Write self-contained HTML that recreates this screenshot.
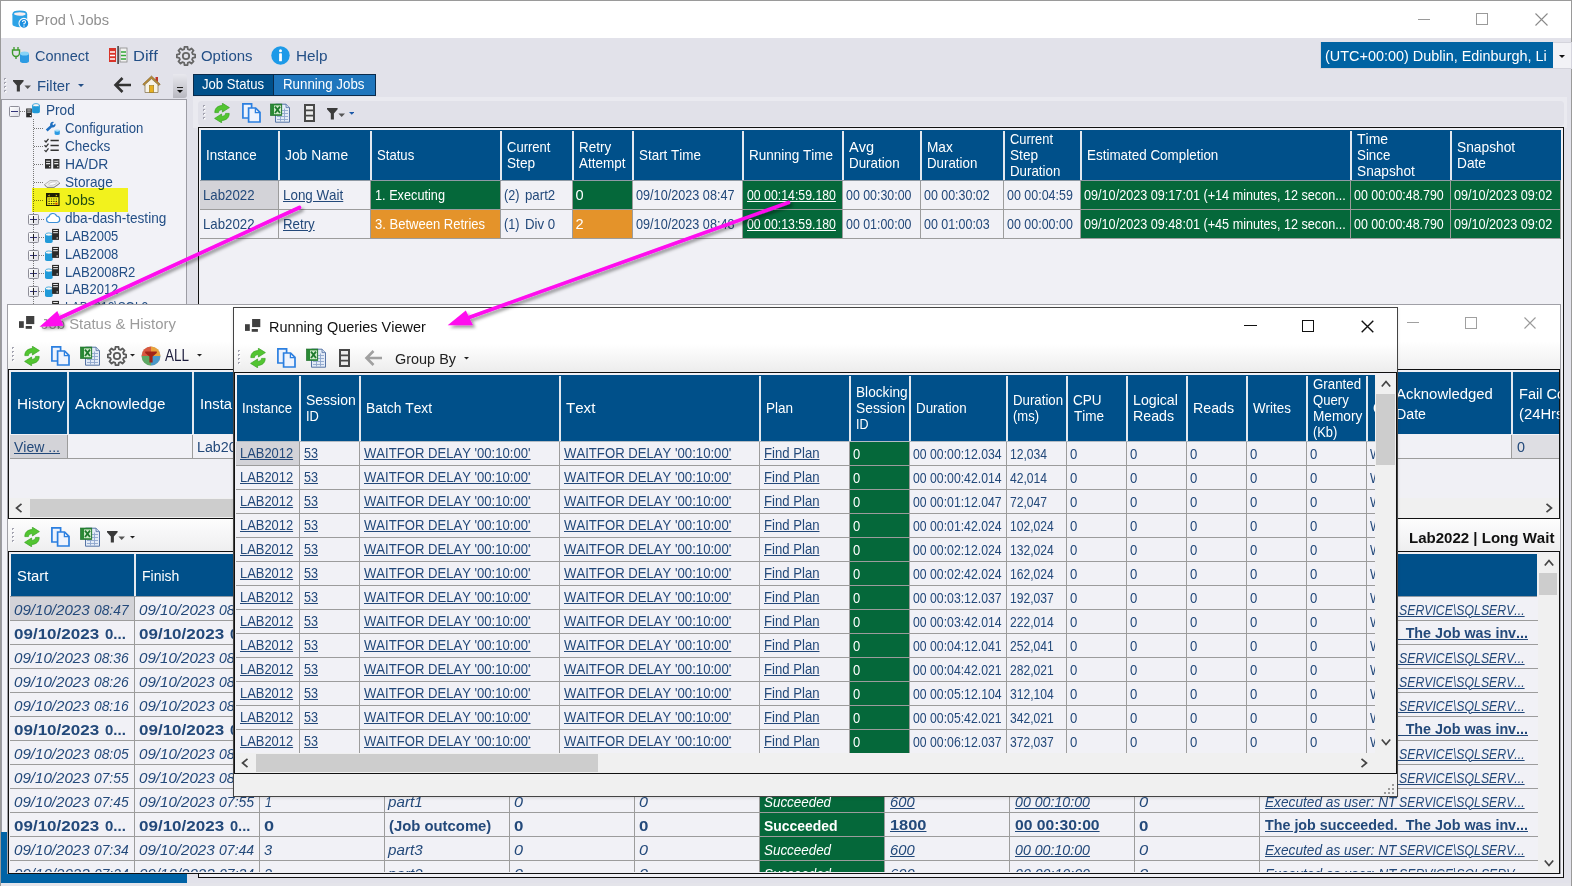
<!DOCTYPE html>
<html lang="en"><head><meta charset="utf-8"><title>Prod \ Jobs</title>
<style>
html,body{margin:0;padding:0}
body{width:1572px;height:886px;overflow:hidden;position:relative;background:#e2e2ea;font-family:"Liberation Sans",sans-serif;font-kerning:none}
div,svg{position:absolute;}
.t{white-space:nowrap;transform-origin:0 50%}
.w{overflow:hidden}
</style></head>
<body>
<div style="left:0px;top:0px;width:1572px;height:38px;background:#fff;"></div><div style="left:0px;top:0px;width:1572px;height:1px;background:#9a9a9a;"></div><div style="left:0px;top:0px;width:1px;height:886px;background:#9a9a9a;"></div><div style="left:1571px;top:0px;width:1px;height:886px;background:#9a9a9a;"></div><svg style="position:absolute;left:12px;top:9.5px" width="17" height="19" viewBox="0 0 17 19"><path d="M0.4 4 V14.2 A7.4 3 0 0 0 15.2 14.2 V4 Z" fill="#2ea3e6"/><ellipse cx="7.8" cy="4" rx="6.6" ry="2.6" fill="#fbeeee" stroke="#2ea3e6" stroke-width="1.6"/>
<circle cx="11.9" cy="13.3" r="4.9" fill="#1c8fe0" stroke="#fff" stroke-width="1.1"/><path d="M10.5 12 A1.5 1.5 0 1 1 12 13.5 V14.4" fill="none" stroke="#fff" stroke-width="1.1"/><circle cx="12" cy="16" r="0.7" fill="#fff"/></svg><div class="t" style="left:35px;top:9.5px;height:20px;line-height:20px;font-size:15.5px;color:#909090;transform:scaleX(0.944);">Prod \ Jobs</div><div style="left:1418px;top:19px;width:12px;height:1px;background:#9a9a9a;"></div><div style="left:1476px;top:13px;width:12px;height:12px;border:1px solid #9a9a9a;box-sizing:border-box;"></div><svg style="position:absolute;left:1535px;top:13px" width="13" height="13" viewBox="0 0 13 13"><path d="M0.5 0.5 L12.5 12.5 M12.5 0.5 L0.5 12.5" stroke="#8a8a8a" stroke-width="1.1"/></svg><svg style="position:absolute;left:11px;top:46px" width="20" height="18" viewBox="0 0 20 18"><path d="M3 1 V4 M7 1 V4" stroke="#3d9a2c" stroke-width="1.3"/><path d="M1.5 4 H8.5 V7 A3.5 3.5 0 0 1 1.5 7 Z" fill="none" stroke="#3d9a2c" stroke-width="1.4"/><path d="M5 10.5 V13" stroke="#3d9a2c" stroke-width="1.4"/>
<path d="M9 7.5 V15 A4.5 2 0 0 0 18 15 V7.5 Z" fill="#2b9be3"/><ellipse cx="13.5" cy="7.5" rx="4.5" ry="2" fill="#86d3f7"/></svg><div class="t" style="left:35px;top:45.5px;height:20px;line-height:20px;font-size:15px;color:#234f86;transform:scaleX(0.967);">Connect</div><svg style="position:absolute;left:108px;top:46px" width="20" height="18" viewBox="0 0 20 18"><rect x="1" y="2" width="7" height="14" fill="#d8342a"/><path d="M2 6 H7 M2 9.5 H7 M2 13 H7" stroke="#fff" stroke-width="1.3"/>
<rect x="9.3" y="0" width="1.6" height="18" fill="#444"/><rect x="12" y="2" width="7" height="14" fill="#f2f2f2" stroke="#888" stroke-width="0.8"/><path d="M13 6 H18 M13 9.5 H18 M13 13 H18" stroke="#35a83a" stroke-width="1.6"/></svg><div class="t" style="left:132.5px;top:45.5px;height:20px;line-height:20px;font-size:15px;color:#234f86;transform:scaleX(1.102);">Diff</div><svg style="position:absolute;left:176.0px;top:45.5px" width="20" height="20" viewBox="0 0 20 20"><path d="M8.20 3.24 L8.52 0.82 L11.48 0.82 L11.80 3.24 L13.51 3.94 L15.44 2.46 L17.54 4.56 L16.06 6.49 L16.76 8.20 L19.18 8.52 L19.18 11.48 L16.76 11.80 L16.06 13.51 L17.54 15.44 L15.44 17.54 L13.51 16.06 L11.80 16.76 L11.48 19.18 L8.52 19.18 L8.20 16.76 L6.49 16.06 L4.56 17.54 L2.46 15.44 L3.94 13.51 L3.24 11.80 L0.82 11.48 L0.82 8.52 L3.24 8.20 L3.94 6.49 L2.46 4.56 L4.56 2.46 L6.49 3.94 Z" fill="none" stroke="#666" stroke-width="1.8" stroke-linejoin="round"/><circle cx="10" cy="10" r="3.2" fill="none" stroke="#666" stroke-width="1.8"/></svg><div class="t" style="left:200.5px;top:45.5px;height:20px;line-height:20px;font-size:15px;color:#234f86;transform:scaleX(0.996);">Options</div><svg style="position:absolute;left:271px;top:46px" width="19" height="19" viewBox="0 0 19 19"><circle cx="9.5" cy="9.5" r="9.2" fill="#1d9ae8"/><circle cx="9.5" cy="4.7" r="1.5" fill="#fff"/><rect x="8.1" y="7.3" width="2.8" height="8" rx="0.6" fill="#fff"/></svg><div class="t" style="left:295.5px;top:45.5px;height:20px;line-height:20px;font-size:15px;color:#234f86;transform:scaleX(1.021);">Help</div><div style="left:1320px;top:41.5px;width:252px;height:27px;background:#f2f2f6;border:1px solid #d4d4dc;box-sizing:border-box;"></div><div style="left:1321px;top:42px;width:232px;height:26px;background:#0063a3;"></div><div class="t" style="left:1324.5px;top:45.8px;height:20px;line-height:20px;font-size:15.2px;color:#fff;transform:scaleX(0.950);">(UTC+00:00) Dublin, Edinburgh, Li</div><svg style="position:absolute;left:1558.5px;top:54.5px" width="6" height="3.5" viewBox="0 0 6 3.5"><path d="M0 0 H6 L3.0 3.0 Z" fill="#111"/></svg><svg style="position:absolute;left:4px;top:78px" width="3" height="18" viewBox="0 0 3 18"><rect x="0" y="0" width="2" height="2" fill="#a4a4b0"/><rect x="1" y="1" width="1.5" height="1.5" fill="#fff"/><rect x="0" y="4" width="2" height="2" fill="#a4a4b0"/><rect x="1" y="5" width="1.5" height="1.5" fill="#fff"/><rect x="0" y="8" width="2" height="2" fill="#a4a4b0"/><rect x="1" y="9" width="1.5" height="1.5" fill="#fff"/><rect x="0" y="12" width="2" height="2" fill="#a4a4b0"/><rect x="1" y="13" width="1.5" height="1.5" fill="#fff"/></svg><svg style="position:absolute;left:13.0px;top:79.7px" width="19" height="12" viewBox="0 0 19 12"><path d="M0 0 H10.6 V1.2 L6.9 5.6 V11.6 H3.8 V5.6 L0 1.2 Z" fill="#3a3a3a"/><path d="M11.4 5.6 H18 L14.7 9 Z" fill="#555"/></svg><div class="t" style="left:37px;top:75.5px;height:20px;line-height:20px;font-size:15px;color:#234f86;transform:scaleX(0.990);">Filter</div><svg style="position:absolute;left:77.5px;top:84.0px" width="6" height="3.5" viewBox="0 0 6 3.5"><path d="M0 0 H6 L3.0 3.0 Z" fill="#234f86"/></svg><svg style="position:absolute;left:113.0px;top:76px" width="20" height="18" viewBox="0 0 20 18"><path d="M18 9 H3 M9.5 2 L2.5 9 L9.5 16" fill="none" stroke="#333" stroke-width="2.6"/></svg><svg style="position:absolute;left:142.0px;top:75.0px" width="19" height="19" viewBox="0 0 19 19"><path d="M13.5 2 H16 V7 L13.5 5 Z" fill="#c0392b"/>
<path d="M9.5 1 L0.8 9.2 L2.2 10.6 L9.5 3.8 L16.8 10.6 L18.2 9.2 Z" fill="#b78a34" stroke="#7a5a1e" stroke-width="0.6"/>
<path d="M3 9.6 L9.5 3.8 L16 9.6 V17.5 H3 Z" fill="#f7f3e6" stroke="#8b7a55" stroke-width="0.8"/>
<rect x="7.3" y="10.5" width="4.4" height="7" fill="#e8b020" stroke="#9a7a20" stroke-width="0.6"/></svg><div style="left:173px;top:74px;width:14px;height:24px;background:linear-gradient(#e8e8ee,#b8b8c0);border-radius:0 3px 3px 0;"></div><div style="left:177px;top:87px;width:6px;height:1.3px;background:#222;"></div><svg style="position:absolute;left:177.0px;top:90.0px" width="6" height="3.5" viewBox="0 0 6 3.5"><path d="M0 0 H6 L3.0 3.0 Z" fill="#111"/></svg><div style="left:193px;top:73.6px;width:182.6px;height:22.2px;background:#0a2a4a;"></div><div style="left:194px;top:74.6px;width:79px;height:20.2px;background:#00508a;"></div><div style="left:274px;top:74.6px;width:100.6px;height:20.2px;background:#1f76bd;"></div><div class="t" style="left:201.5px;top:74.7px;height:19px;line-height:19px;font-size:14.3px;color:#fff;transform:scaleX(0.918);">Job Status</div><div class="t" style="left:283px;top:74.7px;height:19px;line-height:19px;font-size:14.3px;color:#fff;transform:scaleX(0.932);">Running Jobs</div><div style="left:193px;top:97px;width:1374px;height:31px;background:#eaeaf0;"></div><div style="left:198.2px;top:100.6px;width:1365.4px;height:25px;background:#e1e1e9;border-radius:3.5px;"></div><svg style="position:absolute;left:202.5px;top:105px" width="3" height="16" viewBox="0 0 3 16"><rect x="0" y="0" width="2" height="2" fill="#a4a4b0"/><rect x="1" y="1" width="1.5" height="1.5" fill="#fff"/><rect x="0" y="4" width="2" height="2" fill="#a4a4b0"/><rect x="1" y="5" width="1.5" height="1.5" fill="#fff"/><rect x="0" y="8" width="2" height="2" fill="#a4a4b0"/><rect x="1" y="9" width="1.5" height="1.5" fill="#fff"/><rect x="0" y="12" width="2" height="2" fill="#a4a4b0"/><rect x="1" y="13" width="1.5" height="1.5" fill="#fff"/></svg><svg style="position:absolute;left:213.8px;top:102.6px" width="16" height="20" viewBox="0 0 16 20"><path d="M0.8 9.6 C0.8 5 4 2.6 8.4 2.6 L8.4 0.2 L15.4 4.6 L8.4 9 L8.4 6.6 C6.2 6.6 4.8 7.6 4.4 9.6 Z" fill="#52c531" stroke="#36a21f" stroke-width="0.7"/>
<path d="M15.2 10.4 C15.2 15 12 17.4 7.6 17.4 L7.6 19.8 L0.6 15.4 L7.6 11 L7.6 13.4 C9.8 13.4 11.2 12.4 11.6 10.4 Z" fill="#52c531" stroke="#36a21f" stroke-width="0.7"/></svg><svg style="position:absolute;left:241.5px;top:102.8px" width="19" height="20" viewBox="0 0 19 20"><path d="M0.9 0.9 H9.6 V15 H0.9 Z" fill="#eef3fd" stroke="#2b7fe0" stroke-width="1.7"/>
<path d="M6.6 5 H13.6 L18 9.4 V19 H6.6 Z" fill="#eef3fd" stroke="#2b7fe0" stroke-width="1.7"/>
<path d="M13.4 5.2 V9.6 H17.8" fill="none" stroke="#2b7fe0" stroke-width="1.3"/></svg><svg style="position:absolute;left:269.9px;top:103px" width="20" height="20" viewBox="0 0 20 20"><path d="M5.5 1.2 H16 L19.5 4.6 V19.2 H5.5 Z" fill="#e3ebf7" stroke="#5674a6" stroke-width="1"/>
<path d="M16 1.2 V4.6 H19.5" fill="#c9d6ea" stroke="#5674a6" stroke-width="0.8"/>
<path d="M11.5 7.5 H18 M11.5 10.5 H18 M7 13.5 H18 M7 16.5 H18 M14.5 5.5 V18.5 M10.5 13 V18.5" stroke="#8ea6cc" stroke-width="0.9"/>
<rect x="0.4" y="1" width="11.4" height="11.6" fill="#2a8a35" stroke="#1b6b28" stroke-width="0.6"/>
<rect x="4" y="2.4" width="7" height="8.8" fill="#cfe9c9"/>
<path d="M5 3.6 L10 10 M10 3.6 L5 10" stroke="#1e7a2c" stroke-width="1.8"/></svg><svg style="position:absolute;left:303.7px;top:103.8px" width="11" height="18" viewBox="0 0 11 18"><rect x="1" y="1" width="9" height="16" fill="#ececec" stroke="#484848" stroke-width="2"/>
<path d="M1 6.3 H10 M1 11.7 H10" stroke="#484848" stroke-width="1.7"/></svg><svg style="position:absolute;left:326.6px;top:107.7px" width="19" height="12" viewBox="0 0 19 12"><path d="M0 0 H10.6 V1.2 L6.9 5.6 V11.6 H3.8 V5.6 L0 1.2 Z" fill="#3a3a3a"/><path d="M11.4 5.6 H18 L14.7 9 Z" fill="#555"/></svg><svg style="position:absolute;left:348.75px;top:112.025px" width="5.5" height="3.25" viewBox="0 0 5.5 3.25"><path d="M0 0 H5.5 L2.75 2.75 Z" fill="#1b58a8"/></svg>
<div style="left:1px;top:99px;width:186px;height:740px;background:#f2f2f7;border:1px solid #9c9ca4;box-sizing:border-box;"></div><div class="t" style="left:45.7px;top:100.6px;height:19px;line-height:19px;font-size:14.3px;color:#234f86;transform:scaleX(0.953);">Prod</div><div class="t" style="left:64.7px;top:118.6px;height:19px;line-height:19px;font-size:14.3px;color:#234f86;transform:scaleX(0.921);">Configuration</div><div class="t" style="left:64.7px;top:136.6px;height:19px;line-height:19px;font-size:14.3px;color:#234f86;transform:scaleX(0.950);">Checks</div><div class="t" style="left:64.7px;top:154.6px;height:19px;line-height:19px;font-size:14.3px;color:#234f86;transform:scaleX(0.973);">HA/DR</div><div class="t" style="left:64.7px;top:172.6px;height:19px;line-height:19px;font-size:14.3px;color:#234f86;transform:scaleX(0.954);">Storage</div><div class="t" style="left:64.7px;top:190.6px;height:19px;line-height:19px;font-size:14.3px;color:#234f86;transform:scaleX(0.987);">Jobs</div><div class="t" style="left:64.7px;top:208.7px;height:19px;line-height:19px;font-size:14.3px;color:#234f86;transform:scaleX(0.951);">dba-dash-testing</div><div class="t" style="left:64.7px;top:226.7px;height:19px;line-height:19px;font-size:14.3px;color:#234f86;transform:scaleX(0.906);">LAB2005</div><div class="t" style="left:64.7px;top:244.6px;height:19px;line-height:19px;font-size:14.3px;color:#234f86;transform:scaleX(0.906);">LAB2008</div><div class="t" style="left:64.7px;top:262.5px;height:19px;line-height:19px;font-size:14.3px;color:#234f86;transform:scaleX(0.912);">LAB2008R2</div><div class="t" style="left:64.7px;top:280.4px;height:19px;line-height:19px;font-size:14.3px;color:#234f86;transform:scaleX(0.906);">LAB2012</div><div class="t" style="left:64.7px;top:298.3px;height:19px;line-height:19px;font-size:14.3px;color:#234f86;transform:scaleX(0.838);">LAB2012\SQL2</div><div style="left:33px;top:119px;width:1px;height:190px;background-image:linear-gradient(#777 50%,transparent 50%);background-size:1px 2px;"></div><div style="left:20px;top:111px;width:6px;height:1px;background-image:linear-gradient(90deg,#777 50%,transparent 50%);background-size:2px 1px;"></div><div style="left:34px;top:128px;width:10px;height:1px;background-image:linear-gradient(90deg,#777 50%,transparent 50%);background-size:2px 1px;"></div><div style="left:34px;top:146px;width:10px;height:1px;background-image:linear-gradient(90deg,#777 50%,transparent 50%);background-size:2px 1px;"></div><div style="left:34px;top:164px;width:10px;height:1px;background-image:linear-gradient(90deg,#777 50%,transparent 50%);background-size:2px 1px;"></div><div style="left:34px;top:182px;width:10px;height:1px;background-image:linear-gradient(90deg,#777 50%,transparent 50%);background-size:2px 1px;"></div><div style="left:34px;top:200px;width:10px;height:1px;background-image:linear-gradient(90deg,#777 50%,transparent 50%);background-size:2px 1px;"></div><div style="left:39px;top:219px;width:5px;height:1px;background-image:linear-gradient(90deg,#777 50%,transparent 50%);background-size:2px 1px;"></div><div style="left:39px;top:237px;width:5px;height:1px;background-image:linear-gradient(90deg,#777 50%,transparent 50%);background-size:2px 1px;"></div><div style="left:39px;top:255px;width:5px;height:1px;background-image:linear-gradient(90deg,#777 50%,transparent 50%);background-size:2px 1px;"></div><div style="left:39px;top:273px;width:5px;height:1px;background-image:linear-gradient(90deg,#777 50%,transparent 50%);background-size:2px 1px;"></div><div style="left:39px;top:291px;width:5px;height:1px;background-image:linear-gradient(90deg,#777 50%,transparent 50%);background-size:2px 1px;"></div><div style="left:9.0px;top:105.7px;width:11px;height:11px;border:1px solid #8e8e98;border-radius:1.5px;box-sizing:border-box;background:linear-gradient(135deg,#fff,#dedee6);"></div><div style="left:11.0px;top:110.60000000000001px;width:7px;height:1.2px;background:#33347a;"></div><div style="left:28.0px;top:213.8px;width:11px;height:11px;border:1px solid #8e8e98;border-radius:1.5px;box-sizing:border-box;background:linear-gradient(135deg,#fff,#dedee6);"></div><div style="left:30.0px;top:218.70000000000002px;width:7px;height:1.2px;background:#33347a;"></div><div style="left:32.9px;top:215.8px;width:1.2px;height:7px;background:#222;"></div><div style="left:28.0px;top:231.8px;width:11px;height:11px;border:1px solid #8e8e98;border-radius:1.5px;box-sizing:border-box;background:linear-gradient(135deg,#fff,#dedee6);"></div><div style="left:30.0px;top:236.70000000000002px;width:7px;height:1.2px;background:#33347a;"></div><div style="left:32.9px;top:233.8px;width:1.2px;height:7px;background:#222;"></div><div style="left:28.0px;top:249.8px;width:11px;height:11px;border:1px solid #8e8e98;border-radius:1.5px;box-sizing:border-box;background:linear-gradient(135deg,#fff,#dedee6);"></div><div style="left:30.0px;top:254.70000000000002px;width:7px;height:1.2px;background:#33347a;"></div><div style="left:32.9px;top:251.8px;width:1.2px;height:7px;background:#222;"></div><div style="left:28.0px;top:267.8px;width:11px;height:11px;border:1px solid #8e8e98;border-radius:1.5px;box-sizing:border-box;background:linear-gradient(135deg,#fff,#dedee6);"></div><div style="left:30.0px;top:272.7px;width:7px;height:1.2px;background:#33347a;"></div><div style="left:32.9px;top:269.8px;width:1.2px;height:7px;background:#222;"></div><div style="left:28.0px;top:285.8px;width:11px;height:11px;border:1px solid #8e8e98;border-radius:1.5px;box-sizing:border-box;background:linear-gradient(135deg,#fff,#dedee6);"></div><div style="left:30.0px;top:290.7px;width:7px;height:1.2px;background:#33347a;"></div><div style="left:32.9px;top:287.8px;width:1.2px;height:7px;background:#222;"></div><svg style="position:absolute;left:26px;top:101.5px" width="15" height="16" viewBox="0 0 15 16"><rect x="0.2" y="6.5" width="5.6" height="8.8" fill="#2a2a2a"/><path d="M1.2 8 H4.8 M1.2 10.1 H4.8" stroke="#f4f4f4" stroke-width="0.9"/><rect x="3.9" y="13" width="1.1" height="1.1" fill="#f4f4f4"/>
<path d="M6.1 3 V9.8 A3.9 1.5 0 0 0 13.9 9.8 V3 Z" fill="#219ad8"/><ellipse cx="10" cy="3.2" rx="3.4" ry="1.55" fill="#fdf6f2" stroke="#219ad8" stroke-width="0.8"/></svg><svg style="position:absolute;left:44.5px;top:120.5px" width="16" height="15" viewBox="0 0 16 15"><path d="M0.8 8.6 L5.2 4.6 A2.9 2.9 0 0 1 9 1 L7.2 3 L8.4 4.3 L10.3 2.4 A2.9 2.9 0 0 1 6.8 6.4 L2.6 10.4 Z" fill="#1f6fc0"/><path d="M9.6 9.6 V13 A2.6 1.1 0 0 0 14.8 13 V9.6 Z" fill="#2b9be3"/><ellipse cx="12.2" cy="9.6" rx="2.6" ry="1.1" fill="#a8e0fa"/></svg><svg style="position:absolute;left:44.4px;top:138.2px" width="15" height="15" viewBox="0 0 15 15"><path d="M0.5 2.5 L2 4 L4.5 0.8 M0.5 7.3 L2 8.8 L4.5 5.6 M0.5 12.1 L2 13.6 L4.5 10.4" fill="none" stroke="#333" stroke-width="1.25"/><path d="M6.5 2.6 H14.8 M6.5 7.4 H14.8 M6.5 12.2 H14.8" stroke="#333" stroke-width="1.5"/></svg><svg style="position:absolute;left:44.8px;top:159.2px" width="15" height="10" viewBox="0 0 15 10"><rect x="0" y="0" width="6.2" height="9.6" fill="#2e2e2e"/><rect x="8.2" y="0" width="6.2" height="9.6" fill="#2e2e2e"/><path d="M1.1 2.2 H5.1 M9.3 2.2 H13.3 M1.1 4.6 H5.1 M9.3 4.6 H13.3" stroke="#e8e8e8" stroke-width="1.1"/><rect x="4" y="7" width="1.2" height="1.2" fill="#ddd"/><rect x="12.2" y="7" width="1.2" height="1.2" fill="#ddd"/></svg><svg style="position:absolute;left:43.8px;top:180.4px" width="16.4" height="8" viewBox="0 0 16.4 8"><path d="M0.5 4.6 L6 0.6 H13 L16 3.2 L10 7.4 H3 Z" fill="#eee" stroke="#9a9a9a" stroke-width="0.7"/><ellipse cx="8.6" cy="3.6" rx="4" ry="1.5" fill="#fff" stroke="#aaa" stroke-width="0.5" transform="rotate(-12 8.6 3.6)"/><path d="M0.5 4.6 L3 7.4 H10 L16 3.2" fill="none" stroke="#777" stroke-width="0.8"/></svg><svg style="position:absolute;left:45.8px;top:192.6px" width="14" height="13.4" viewBox="0 0 14 13.4"><rect x="0.6" y="0.6" width="12.4" height="12" fill="#fffbe0" stroke="#1e1e1e" stroke-width="1.2"/><rect x="0.6" y="0.6" width="12.4" height="3.6" fill="#1e1e1e"/><path d="M3.6 1.4 L2 2.4 L3.6 3.4 Z M9.8 1.4 L11.4 2.4 L9.8 3.4 Z" fill="#f0d020"/><path d="M2.4 6 H3.8 M4.8 6 H6.2 M7.2 6 H8.6 M9.6 6 H11 M2.4 8.3 H3.8 M4.8 8.3 H6.2 M7.2 8.3 H8.6 M9.6 8.3 H11 M2.4 10.6 H3.8 M4.8 10.6 H6.2 M7.2 10.6 H8.6" stroke="#444" stroke-width="1.2"/><rect x="9.3" y="9.7" width="2.2" height="2" fill="#d8402a"/></svg><svg style="position:absolute;left:45px;top:212.3px" width="16" height="12" viewBox="0 0 16 12"><path d="M4 10.5 A3 3 0 0 1 4 4.6 A4 4 0 0 1 11.6 4 A3.3 3.3 0 0 1 12.2 10.5 Z" fill="#fff" stroke="#3b8fd8" stroke-width="1.2"/></svg><svg style="position:absolute;left:44px;top:228px" width="16" height="16" viewBox="0 0 16 16"><path d="M1 6.3 V13.4 A3.85 1.5 0 0 0 8.7 13.4 V6.3 Z" fill="#219ad8"/><ellipse cx="4.85" cy="6.5" rx="3.35" ry="1.55" fill="#fdf6f2" stroke="#219ad8" stroke-width="0.8"/>
<rect x="8.1" y="0.9" width="6.9" height="11" fill="#2a2a2a"/><path d="M9.2 2.5 H13.9 M9.2 4.7 H13.9" stroke="#f4f4f4" stroke-width="0.95"/><rect x="12.6" y="9.4" width="1.2" height="1.2" fill="#f4f4f4"/></svg><svg style="position:absolute;left:44px;top:246px" width="16" height="16" viewBox="0 0 16 16"><path d="M1 6.3 V13.4 A3.85 1.5 0 0 0 8.7 13.4 V6.3 Z" fill="#219ad8"/><ellipse cx="4.85" cy="6.5" rx="3.35" ry="1.55" fill="#fdf6f2" stroke="#219ad8" stroke-width="0.8"/>
<rect x="8.1" y="0.9" width="6.9" height="11" fill="#2a2a2a"/><path d="M9.2 2.5 H13.9 M9.2 4.7 H13.9" stroke="#f4f4f4" stroke-width="0.95"/><rect x="12.6" y="9.4" width="1.2" height="1.2" fill="#f4f4f4"/></svg><svg style="position:absolute;left:44px;top:264px" width="16" height="16" viewBox="0 0 16 16"><path d="M1 6.3 V13.4 A3.85 1.5 0 0 0 8.7 13.4 V6.3 Z" fill="#219ad8"/><ellipse cx="4.85" cy="6.5" rx="3.35" ry="1.55" fill="#fdf6f2" stroke="#219ad8" stroke-width="0.8"/>
<rect x="8.1" y="0.9" width="6.9" height="11" fill="#2a2a2a"/><path d="M9.2 2.5 H13.9 M9.2 4.7 H13.9" stroke="#f4f4f4" stroke-width="0.95"/><rect x="12.6" y="9.4" width="1.2" height="1.2" fill="#f4f4f4"/></svg><svg style="position:absolute;left:44px;top:282px" width="16" height="16" viewBox="0 0 16 16"><path d="M1 6.3 V13.4 A3.85 1.5 0 0 0 8.7 13.4 V6.3 Z" fill="#219ad8"/><ellipse cx="4.85" cy="6.5" rx="3.35" ry="1.55" fill="#fdf6f2" stroke="#219ad8" stroke-width="0.8"/>
<rect x="8.1" y="0.9" width="6.9" height="11" fill="#2a2a2a"/><path d="M9.2 2.5 H13.9 M9.2 4.7 H13.9" stroke="#f4f4f4" stroke-width="0.95"/><rect x="12.6" y="9.4" width="1.2" height="1.2" fill="#f4f4f4"/></svg><svg style="position:absolute;left:44px;top:300px" width="16" height="16" viewBox="0 0 16 16"><path d="M1 6.3 V13.4 A3.85 1.5 0 0 0 8.7 13.4 V6.3 Z" fill="#219ad8"/><ellipse cx="4.85" cy="6.5" rx="3.35" ry="1.55" fill="#fdf6f2" stroke="#219ad8" stroke-width="0.8"/>
<rect x="8.1" y="0.9" width="6.9" height="11" fill="#2a2a2a"/><path d="M9.2 2.5 H13.9 M9.2 4.7 H13.9" stroke="#f4f4f4" stroke-width="0.95"/><rect x="12.6" y="9.4" width="1.2" height="1.2" fill="#f4f4f4"/></svg><div style="left:31.8px;top:188.2px;width:96.2px;height:23.4px;background:#ffff1e;mix-blend-mode:multiply;"></div>
<div style="left:198px;top:127px;width:1366px;height:750.5px;background:#f0f0f5;border:1px solid #111;box-sizing:border-box;"></div><div style="left:200.8px;top:130px;width:1360.2px;height:50px;background:#00508a;"></div><div style="left:277.8px;top:130.5px;width:2.2px;height:49px;background:#e3e9f0;"></div><div style="left:369.8px;top:130.5px;width:2.2px;height:49px;background:#e3e9f0;"></div><div style="left:499.8px;top:130.5px;width:2.2px;height:49px;background:#e3e9f0;"></div><div style="left:571.8px;top:130.5px;width:2.2px;height:49px;background:#e3e9f0;"></div><div style="left:631.8px;top:130.5px;width:2.2px;height:49px;background:#e3e9f0;"></div><div style="left:741.8px;top:130.5px;width:2.2px;height:49px;background:#e3e9f0;"></div><div style="left:841.8px;top:130.5px;width:2.2px;height:49px;background:#e3e9f0;"></div><div style="left:919.8px;top:130.5px;width:2.2px;height:49px;background:#e3e9f0;"></div><div style="left:1002.8px;top:130.5px;width:2.2px;height:49px;background:#e3e9f0;"></div><div style="left:1079.8px;top:130.5px;width:2.2px;height:49px;background:#e3e9f0;"></div><div style="left:1349.8px;top:130.5px;width:2.2px;height:49px;background:#e3e9f0;"></div><div style="left:1449.8px;top:130.5px;width:2.2px;height:49px;background:#e3e9f0;"></div><div class="t" style="left:205.5px;top:145.9px;height:19px;line-height:19px;font-size:14.3px;color:#fff;transform:scaleX(0.936);">Instance</div><div class="t" style="left:285.0px;top:145.9px;height:19px;line-height:19px;font-size:14.3px;color:#fff;transform:scaleX(0.968);">Job Name</div><div class="t" style="left:376.7px;top:145.9px;height:19px;line-height:19px;font-size:14.3px;color:#fff;transform:scaleX(0.918);">Status</div><div class="t" style="left:506.79999999999995px;top:137.9px;height:19px;line-height:19px;font-size:14.3px;color:#fff;transform:scaleX(0.910);">Current</div><div class="t" style="left:506.79999999999995px;top:153.8px;height:19px;line-height:19px;font-size:14.3px;color:#fff;transform:scaleX(0.955);">Step</div><div class="t" style="left:578.8px;top:137.9px;height:19px;line-height:19px;font-size:14.3px;color:#fff;transform:scaleX(0.940);">Retry</div><div class="t" style="left:578.8px;top:153.8px;height:19px;line-height:19px;font-size:14.3px;color:#fff;transform:scaleX(0.942);">Attempt</div><div class="t" style="left:638.9px;top:145.9px;height:19px;line-height:19px;font-size:14.3px;color:#fff;transform:scaleX(0.938);">Start Time</div><div class="t" style="left:748.8px;top:145.9px;height:19px;line-height:19px;font-size:14.3px;color:#fff;transform:scaleX(0.945);">Running Time</div><div class="t" style="left:848.5px;top:137.9px;height:19px;line-height:19px;font-size:14.3px;color:#fff;transform:scaleX(1.017);">Avg</div><div class="t" style="left:848.5px;top:153.8px;height:19px;line-height:19px;font-size:14.3px;color:#fff;transform:scaleX(0.936);">Duration</div><div class="t" style="left:926.6999999999999px;top:137.9px;height:19px;line-height:19px;font-size:14.3px;color:#fff;transform:scaleX(0.955);">Max</div><div class="t" style="left:926.6999999999999px;top:153.8px;height:19px;line-height:19px;font-size:14.3px;color:#fff;transform:scaleX(0.931);">Duration</div><div class="t" style="left:1009.6999999999999px;top:129.9px;height:19px;line-height:19px;font-size:14.3px;color:#fff;transform:scaleX(0.902);">Current</div><div class="t" style="left:1009.6999999999999px;top:145.9px;height:19px;line-height:19px;font-size:14.3px;color:#fff;transform:scaleX(0.955);">Step</div><div class="t" style="left:1009.6999999999999px;top:161.9px;height:19px;line-height:19px;font-size:14.3px;color:#fff;transform:scaleX(0.931);">Duration</div><div class="t" style="left:1086.8000000000002px;top:145.9px;height:19px;line-height:19px;font-size:14.3px;color:#fff;transform:scaleX(0.939);">Estimated Completion</div><div class="t" style="left:1357.3000000000002px;top:129.9px;height:19px;line-height:19px;font-size:14.3px;color:#fff;transform:scaleX(0.979);">Time</div><div class="t" style="left:1357.3000000000002px;top:145.9px;height:19px;line-height:19px;font-size:14.3px;color:#fff;transform:scaleX(0.934);">Since</div><div class="t" style="left:1357.3000000000002px;top:161.9px;height:19px;line-height:19px;font-size:14.3px;color:#fff;transform:scaleX(0.957);">Snapshot</div><div class="t" style="left:1456.9px;top:137.9px;height:19px;line-height:19px;font-size:14.3px;color:#fff;transform:scaleX(0.963);">Snapshot</div><div class="t" style="left:1456.9px;top:153.8px;height:19px;line-height:19px;font-size:14.3px;color:#fff;transform:scaleX(0.957);">Date</div><div style="left:199.6px;top:181px;width:1361.4px;height:28px;background:#f1f1f6;"></div><div style="left:199.6px;top:181px;width:78.4px;height:28px;background:#d3d3d8;"></div><div class="t" style="left:202.7px;top:185.9px;height:19px;line-height:19px;font-size:14.6px;color:#23497a;transform:scaleX(0.908);">Lab2022</div><div class="t" style="left:282.7px;top:185.9px;height:19px;line-height:19px;font-size:14.6px;color:#23497a;text-decoration:underline;transform:scaleX(0.917);">Long Wait</div><div style="left:371px;top:181px;width:129px;height:28px;background:#05683a;"></div><div class="t" style="left:374.5px;top:185.9px;height:19px;line-height:19px;font-size:14.6px;color:#fff;transform:scaleX(0.871);">1. Executing</div><div class="t" style="left:504.0px;top:185.9px;height:19px;line-height:19px;font-size:14.6px;color:#23497a;transform:scaleX(0.863);">(2)</div><div style="left:573px;top:181px;width:59px;height:28px;background:#05683a;"></div><div class="t" style="left:575.6px;top:185.9px;height:19px;line-height:19px;font-size:14.6px;color:#fff;">0</div><div class="t" style="left:635.7px;top:185.9px;height:19px;line-height:19px;font-size:14.6px;color:#23497a;transform:scaleX(0.867);">09/10/2023 08:47</div><div style="left:743px;top:181px;width:99px;height:28px;background:#05683a;"></div><div class="t" style="left:746.7px;top:185.9px;height:19px;line-height:19px;font-size:14.6px;color:#fff;text-decoration:underline;transform:scaleX(0.843);">00 00:14:59.180</div><div class="t" style="left:845.7px;top:185.9px;height:19px;line-height:19px;font-size:14.6px;color:#23497a;transform:scaleX(0.849);">00 00:30:00</div><div class="t" style="left:923.6px;top:185.9px;height:19px;line-height:19px;font-size:14.6px;color:#23497a;transform:scaleX(0.852);">00 00:30:02</div><div class="t" style="left:1006.6px;top:185.9px;height:19px;line-height:19px;font-size:14.6px;color:#23497a;transform:scaleX(0.854);">00 00:04:59</div><div style="left:1081px;top:181px;width:269px;height:28px;background:#05683a;"></div><div class="t" style="left:1083.7px;top:185.9px;height:19px;line-height:19px;font-size:14.6px;color:#fff;transform:scaleX(0.866);">09/10/2023 09:17:01 (+14 minutes, 12 secon...</div><div style="left:1351px;top:181px;width:99px;height:28px;background:#05683a;"></div><div class="t" style="left:1353.6px;top:185.9px;height:19px;line-height:19px;font-size:14.6px;color:#fff;transform:scaleX(0.850);">00 00:00:48.790</div><div style="left:1451px;top:181px;width:109px;height:28px;background:#05683a;"></div><div class="t" style="left:1453.8px;top:185.9px;height:19px;line-height:19px;font-size:14.6px;color:#fff;transform:scaleX(0.865);">09/10/2023 09:02</div><div class="t" style="left:525.0px;top:185.9px;height:19px;line-height:19px;font-size:14.6px;color:#23497a;transform:scaleX(0.908);">part2</div><div style="left:200px;top:209px;width:1361px;height:1px;background:#9c9c9c;"></div><div style="left:278px;top:181px;width:1px;height:29px;background:#9c9c9c;"></div><div style="left:370px;top:181px;width:1px;height:29px;background:#9c9c9c;"></div><div style="left:500px;top:181px;width:1px;height:29px;background:#9c9c9c;"></div><div style="left:572px;top:181px;width:1px;height:29px;background:#9c9c9c;"></div><div style="left:632px;top:181px;width:1px;height:29px;background:#9c9c9c;"></div><div style="left:742px;top:181px;width:1px;height:29px;background:#9c9c9c;"></div><div style="left:842px;top:181px;width:1px;height:29px;background:#9c9c9c;"></div><div style="left:920px;top:181px;width:1px;height:29px;background:#9c9c9c;"></div><div style="left:1003px;top:181px;width:1px;height:29px;background:#9c9c9c;"></div><div style="left:1080px;top:181px;width:1px;height:29px;background:#9c9c9c;"></div><div style="left:1350px;top:181px;width:1px;height:29px;background:#9c9c9c;"></div><div style="left:1450px;top:181px;width:1px;height:29px;background:#9c9c9c;"></div><div style="left:1560px;top:181px;width:1px;height:29px;background:#9c9c9c;"></div><div style="left:199.6px;top:210px;width:1361.4px;height:28px;background:#f1f1f6;"></div><div class="t" style="left:202.7px;top:214.9px;height:19px;line-height:19px;font-size:14.6px;color:#23497a;transform:scaleX(0.908);">Lab2022</div><div class="t" style="left:282.7px;top:214.9px;height:19px;line-height:19px;font-size:14.6px;color:#23497a;text-decoration:underline;transform:scaleX(0.909);">Retry</div><div style="left:371px;top:210px;width:129px;height:28px;background:#e4932a;"></div><div class="t" style="left:374.5px;top:214.9px;height:19px;line-height:19px;font-size:14.6px;color:#fff;transform:scaleX(0.893);">3. Between Retries</div><div class="t" style="left:504.0px;top:214.9px;height:19px;line-height:19px;font-size:14.6px;color:#23497a;transform:scaleX(0.863);">(1)</div><div style="left:573px;top:210px;width:59px;height:28px;background:#e4932a;"></div><div class="t" style="left:575.6px;top:214.9px;height:19px;line-height:19px;font-size:14.6px;color:#fff;">2</div><div class="t" style="left:635.7px;top:214.9px;height:19px;line-height:19px;font-size:14.6px;color:#23497a;transform:scaleX(0.867);">09/10/2023 08:48</div><div style="left:743px;top:210px;width:99px;height:28px;background:#05683a;"></div><div class="t" style="left:746.7px;top:214.9px;height:19px;line-height:19px;font-size:14.6px;color:#fff;text-decoration:underline;transform:scaleX(0.843);">00 00:13:59.180</div><div class="t" style="left:845.7px;top:214.9px;height:19px;line-height:19px;font-size:14.6px;color:#23497a;transform:scaleX(0.849);">00 01:00:00</div><div class="t" style="left:923.6px;top:214.9px;height:19px;line-height:19px;font-size:14.6px;color:#23497a;transform:scaleX(0.852);">00 01:00:03</div><div class="t" style="left:1006.6px;top:214.9px;height:19px;line-height:19px;font-size:14.6px;color:#23497a;transform:scaleX(0.854);">00 00:00:00</div><div style="left:1081px;top:210px;width:269px;height:28px;background:#05683a;"></div><div class="t" style="left:1083.7px;top:214.9px;height:19px;line-height:19px;font-size:14.6px;color:#fff;transform:scaleX(0.866);">09/10/2023 09:48:01 (+45 minutes, 12 secon...</div><div style="left:1351px;top:210px;width:99px;height:28px;background:#05683a;"></div><div class="t" style="left:1353.6px;top:214.9px;height:19px;line-height:19px;font-size:14.6px;color:#fff;transform:scaleX(0.850);">00 00:00:48.790</div><div style="left:1451px;top:210px;width:109px;height:28px;background:#05683a;"></div><div class="t" style="left:1453.8px;top:214.9px;height:19px;line-height:19px;font-size:14.6px;color:#fff;transform:scaleX(0.865);">09/10/2023 09:02</div><div class="t" style="left:525.0px;top:214.9px;height:19px;line-height:19px;font-size:14.6px;color:#23497a;transform:scaleX(0.908);">Div 0</div><div style="left:200px;top:238px;width:1361px;height:1px;background:#9c9c9c;"></div><div style="left:278px;top:210px;width:1px;height:29px;background:#9c9c9c;"></div><div style="left:370px;top:210px;width:1px;height:29px;background:#9c9c9c;"></div><div style="left:500px;top:210px;width:1px;height:29px;background:#9c9c9c;"></div><div style="left:572px;top:210px;width:1px;height:29px;background:#9c9c9c;"></div><div style="left:632px;top:210px;width:1px;height:29px;background:#9c9c9c;"></div><div style="left:742px;top:210px;width:1px;height:29px;background:#9c9c9c;"></div><div style="left:842px;top:210px;width:1px;height:29px;background:#9c9c9c;"></div><div style="left:920px;top:210px;width:1px;height:29px;background:#9c9c9c;"></div><div style="left:1003px;top:210px;width:1px;height:29px;background:#9c9c9c;"></div><div style="left:1080px;top:210px;width:1px;height:29px;background:#9c9c9c;"></div><div style="left:1350px;top:210px;width:1px;height:29px;background:#9c9c9c;"></div><div style="left:1450px;top:210px;width:1px;height:29px;background:#9c9c9c;"></div><div style="left:1560px;top:210px;width:1px;height:29px;background:#9c9c9c;"></div><div style="left:200px;top:180px;width:1361px;height:1px;background:#8f9aa5;"></div>
<div style="left:1px;top:832.4px;width:186px;height:51px;background:#0063a6;"></div><div style="left:1px;top:883.4px;width:1570px;height:3px;background:#e4e4ea;"></div><div style="left:7px;top:304px;width:1554px;height:570px;background:#e2e2ea;border:1px solid #a0a0a6;box-sizing:border-box;"></div><div style="left:8px;top:305px;width:1552px;height:36px;background:#fff;"></div><svg style="position:absolute;left:19.1px;top:315.8px" width="16" height="13" viewBox="0 0 16 13"><rect x="7.1" y="0" width="8.2" height="8.1" fill="#404040"/><rect x="0" y="5.2" width="4.8" height="6.7" fill="#404040"/><rect x="6.7" y="10" width="6.2" height="2.8" fill="#404040"/></svg><div class="t" style="left:41px;top:313.5px;height:20px;line-height:20px;font-size:15.2px;color:#9b9b9b;transform:scaleX(0.980);">Job Status &amp; History</div><div style="left:1407px;top:322px;width:12px;height:1px;background:#a0a0a0;"></div><div style="left:1465px;top:317px;width:12px;height:12px;border:1px solid #a0a0a0;box-sizing:border-box;"></div><svg style="position:absolute;left:1524px;top:317px" width="12" height="12" viewBox="0 0 12 12"><path d="M0.5 0.5 L11.5 11.5 M11.5 0.5 L0.5 11.5" stroke="#9a9a9a" stroke-width="1.1"/></svg><div style="left:8px;top:341px;width:1552px;height:28.5px;background:linear-gradient(#fff 0,#fafafa 30%,#efeff0 100%);"></div><svg style="position:absolute;left:12px;top:347px" width="3" height="16" viewBox="0 0 3 16"><rect x="0" y="0" width="2" height="2" fill="#a4a4b0"/><rect x="1" y="1" width="1.5" height="1.5" fill="#fff"/><rect x="0" y="4" width="2" height="2" fill="#a4a4b0"/><rect x="1" y="5" width="1.5" height="1.5" fill="#fff"/><rect x="0" y="8" width="2" height="2" fill="#a4a4b0"/><rect x="1" y="9" width="1.5" height="1.5" fill="#fff"/><rect x="0" y="12" width="2" height="2" fill="#a4a4b0"/><rect x="1" y="13" width="1.5" height="1.5" fill="#fff"/></svg><svg style="position:absolute;left:23.5px;top:345.5px" width="16" height="20" viewBox="0 0 16 20"><path d="M0.8 9.6 C0.8 5 4 2.6 8.4 2.6 L8.4 0.2 L15.4 4.6 L8.4 9 L8.4 6.6 C6.2 6.6 4.8 7.6 4.4 9.6 Z" fill="#52c531" stroke="#36a21f" stroke-width="0.7"/>
<path d="M15.2 10.4 C15.2 15 12 17.4 7.6 17.4 L7.6 19.8 L0.6 15.4 L7.6 11 L7.6 13.4 C9.8 13.4 11.2 12.4 11.6 10.4 Z" fill="#52c531" stroke="#36a21f" stroke-width="0.7"/></svg><svg style="position:absolute;left:51.0px;top:345.5px" width="19" height="20" viewBox="0 0 19 20"><path d="M0.9 0.9 H9.6 V15 H0.9 Z" fill="#eef3fd" stroke="#2b7fe0" stroke-width="1.7"/>
<path d="M6.6 5 H13.6 L18 9.4 V19 H6.6 Z" fill="#eef3fd" stroke="#2b7fe0" stroke-width="1.7"/>
<path d="M13.4 5.2 V9.6 H17.8" fill="none" stroke="#2b7fe0" stroke-width="1.3"/></svg><svg style="position:absolute;left:79.5px;top:345.5px" width="20" height="20" viewBox="0 0 20 20"><path d="M5.5 1.2 H16 L19.5 4.6 V19.2 H5.5 Z" fill="#e3ebf7" stroke="#5674a6" stroke-width="1"/>
<path d="M16 1.2 V4.6 H19.5" fill="#c9d6ea" stroke="#5674a6" stroke-width="0.8"/>
<path d="M11.5 7.5 H18 M11.5 10.5 H18 M7 13.5 H18 M7 16.5 H18 M14.5 5.5 V18.5 M10.5 13 V18.5" stroke="#8ea6cc" stroke-width="0.9"/>
<rect x="0.4" y="1" width="11.4" height="11.6" fill="#2a8a35" stroke="#1b6b28" stroke-width="0.6"/>
<rect x="4" y="2.4" width="7" height="8.8" fill="#cfe9c9"/>
<path d="M5 3.6 L10 10 M10 3.6 L5 10" stroke="#1e7a2c" stroke-width="1.8"/></svg><svg style="position:absolute;left:106.5px;top:345.5px" width="20" height="20" viewBox="0 0 20 20"><path d="M8.20 3.24 L8.52 0.82 L11.48 0.82 L11.80 3.24 L13.51 3.94 L15.44 2.46 L17.54 4.56 L16.06 6.49 L16.76 8.20 L19.18 8.52 L19.18 11.48 L16.76 11.80 L16.06 13.51 L17.54 15.44 L15.44 17.54 L13.51 16.06 L11.80 16.76 L11.48 19.18 L8.52 19.18 L8.20 16.76 L6.49 16.06 L4.56 17.54 L2.46 15.44 L3.94 13.51 L3.24 11.80 L0.82 11.48 L0.82 8.52 L3.24 8.20 L3.94 6.49 L2.46 4.56 L4.56 2.46 L6.49 3.94 Z" fill="none" stroke="#5a5a5a" stroke-width="1.8" stroke-linejoin="round"/><circle cx="10" cy="10" r="3.2" fill="none" stroke="#5a5a5a" stroke-width="1.8"/></svg><svg style="position:absolute;left:130.0px;top:354.25px" width="5" height="3.0" viewBox="0 0 5 3.0"><path d="M0 0 H5 L2.5 2.5 Z" fill="#222"/></svg><svg style="position:absolute;left:140.5px;top:345.5px" width="20" height="20" viewBox="0 0 20 20"><circle cx="10" cy="10" r="9.6" fill="#c8c0b0"/>
<path d="M10 10 L10 0.6 A9.4 9.4 0 0 1 19.4 10 Z" fill="#e9a23c"/>
<path d="M10 10 L19.4 10 A9.4 9.4 0 0 1 10 19.4 Z" fill="#4b9ac9"/>
<path d="M10 10 L10 19.4 A9.4 9.4 0 0 1 0.6 10 Z" fill="#5ea964"/>
<path d="M10 10 L0.6 10 A9.4 9.4 0 0 1 10 0.6 Z" fill="#d8583f"/>
<path d="M4.2 5.4 H15.8 V7 L11.6 10.6 V16.6 H8.4 V10.6 L4.2 7 Z" fill="#a32416"/></svg><div class="t" style="left:165px;top:344.7px;height:21px;line-height:21px;font-size:16.5px;color:#1c1c3c;transform:scaleX(0.817);">ALL</div><svg style="position:absolute;left:197.0px;top:354.25px" width="5" height="3.0" viewBox="0 0 5 3.0"><path d="M0 0 H5 L2.5 2.5 Z" fill="#222"/></svg><div style="left:8px;top:369.2px;width:1552px;height:149.8px;background:#f0f0f5;border:1.2px solid #111;box-sizing:border-box;"></div><div style="left:11px;top:372px;width:1548px;height:62px;background:#00508a;"></div><div style="left:66.9px;top:372px;width:2.2px;height:62px;background:#e3e9f0;"></div><div style="left:191.9px;top:372px;width:2.2px;height:62px;background:#e3e9f0;"></div><div style="left:1394.9px;top:372px;width:2.2px;height:62px;background:#e3e9f0;"></div><div style="left:1510.9px;top:372px;width:2.2px;height:62px;background:#e3e9f0;"></div><div class="t" style="left:16.6px;top:394.0px;height:20px;line-height:20px;font-size:15.4px;color:#fff;transform:scaleX(0.993);">History</div><div class="t" style="left:74.6px;top:394.0px;height:20px;line-height:20px;font-size:15.4px;color:#fff;transform:scaleX(0.987);">Acknowledge</div><div class="t" style="left:199.8px;top:394.0px;height:20px;line-height:20px;font-size:15.4px;color:#fff;transform:scaleX(0.958);">Instance</div><div class="t" style="left:1396px;top:384.0px;height:20px;line-height:20px;font-size:15.4px;color:#fff;transform:scaleX(0.968);">Acknowledged</div><div class="t" style="left:1396px;top:404.0px;height:20px;line-height:20px;font-size:15.4px;color:#fff;transform:scaleX(0.922);">Date</div><div class="t" style="left:1518.6px;top:384.0px;height:20px;line-height:20px;font-size:15.4px;color:#fff;transform:scaleX(0.946);width:42.5px;overflow:hidden;">Fail Count</div><div class="t" style="left:1518.6px;top:404.0px;height:20px;line-height:20px;font-size:15.4px;color:#fff;transform:scaleX(0.962);width:41.8px;overflow:hidden;">(24Hrs)</div><div style="left:10px;top:434.5px;width:1549px;height:23.5px;background:#f1f1f6;"></div><div style="left:10px;top:434.5px;width:57px;height:23.5px;background:#d3d3d8;"></div><div style="left:1512px;top:434.5px;width:47px;height:23.5px;background:#dedee3;"></div><div style="left:10px;top:458px;width:1549px;height:1px;background:#9c9c9c;"></div><div style="left:67px;top:434.5px;width:1px;height:24.5px;background:#9c9c9c;"></div><div style="left:192px;top:434.5px;width:1px;height:24.5px;background:#9c9c9c;"></div><div style="left:1395px;top:434.5px;width:1px;height:24.5px;background:#9c9c9c;"></div><div style="left:1511px;top:434.5px;width:1px;height:24.5px;background:#9c9c9c;"></div><div class="t" style="left:14.4px;top:436.6px;height:20px;line-height:20px;font-size:15.4px;color:#23497a;text-decoration:underline;transform:scaleX(0.912);">View ...</div><div class="t" style="left:197.2px;top:436.9px;height:20px;line-height:20px;font-size:15.4px;color:#23497a;transform:scaleX(0.927);">Lab2022</div><div class="t" style="left:1516.5px;top:436.9px;height:20px;line-height:20px;font-size:15.4px;color:#23497a;transform:scaleX(0.934);">0</div><div style="left:9.2px;top:498px;width:1549.6px;height:19.8px;background:#f0f0f0;"></div><div style="left:30px;top:499px;width:1200px;height:18.4px;background:#cdcdcd;"></div><svg style="position:absolute;left:15px;top:503px" width="8" height="10" viewBox="0 0 8 10"><path d="M6.5 0.8 L1.5 5 L6.5 9.2" fill="none" stroke="#444" stroke-width="1.7"/></svg><svg style="position:absolute;left:1544.5px;top:503px" width="8" height="10" viewBox="0 0 8 10"><path d="M1.5 0.8 L6.5 5 L1.5 9.2" fill="none" stroke="#444" stroke-width="1.7"/></svg><div style="left:8px;top:519px;width:1552px;height:33px;background:linear-gradient(#fdfdfd 0,#f7f7f8 40%,#eeeeef 100%);"></div><svg style="position:absolute;left:12px;top:528px" width="3" height="16" viewBox="0 0 3 16"><rect x="0" y="0" width="2" height="2" fill="#a4a4b0"/><rect x="1" y="1" width="1.5" height="1.5" fill="#fff"/><rect x="0" y="4" width="2" height="2" fill="#a4a4b0"/><rect x="1" y="5" width="1.5" height="1.5" fill="#fff"/><rect x="0" y="8" width="2" height="2" fill="#a4a4b0"/><rect x="1" y="9" width="1.5" height="1.5" fill="#fff"/><rect x="0" y="12" width="2" height="2" fill="#a4a4b0"/><rect x="1" y="13" width="1.5" height="1.5" fill="#fff"/></svg><svg style="position:absolute;left:23.5px;top:526.5px" width="16" height="20" viewBox="0 0 16 20"><path d="M0.8 9.6 C0.8 5 4 2.6 8.4 2.6 L8.4 0.2 L15.4 4.6 L8.4 9 L8.4 6.6 C6.2 6.6 4.8 7.6 4.4 9.6 Z" fill="#52c531" stroke="#36a21f" stroke-width="0.7"/>
<path d="M15.2 10.4 C15.2 15 12 17.4 7.6 17.4 L7.6 19.8 L0.6 15.4 L7.6 11 L7.6 13.4 C9.8 13.4 11.2 12.4 11.6 10.4 Z" fill="#52c531" stroke="#36a21f" stroke-width="0.7"/></svg><svg style="position:absolute;left:51.0px;top:526.5px" width="19" height="20" viewBox="0 0 19 20"><path d="M0.9 0.9 H9.6 V15 H0.9 Z" fill="#eef3fd" stroke="#2b7fe0" stroke-width="1.7"/>
<path d="M6.6 5 H13.6 L18 9.4 V19 H6.6 Z" fill="#eef3fd" stroke="#2b7fe0" stroke-width="1.7"/>
<path d="M13.4 5.2 V9.6 H17.8" fill="none" stroke="#2b7fe0" stroke-width="1.3"/></svg><svg style="position:absolute;left:79.5px;top:526.5px" width="20" height="20" viewBox="0 0 20 20"><path d="M5.5 1.2 H16 L19.5 4.6 V19.2 H5.5 Z" fill="#e3ebf7" stroke="#5674a6" stroke-width="1"/>
<path d="M16 1.2 V4.6 H19.5" fill="#c9d6ea" stroke="#5674a6" stroke-width="0.8"/>
<path d="M11.5 7.5 H18 M11.5 10.5 H18 M7 13.5 H18 M7 16.5 H18 M14.5 5.5 V18.5 M10.5 13 V18.5" stroke="#8ea6cc" stroke-width="0.9"/>
<rect x="0.4" y="1" width="11.4" height="11.6" fill="#2a8a35" stroke="#1b6b28" stroke-width="0.6"/>
<rect x="4" y="2.4" width="7" height="8.8" fill="#cfe9c9"/>
<path d="M5 3.6 L10 10 M10 3.6 L5 10" stroke="#1e7a2c" stroke-width="1.8"/></svg><svg style="position:absolute;left:107.0px;top:531.2px" width="19" height="12" viewBox="0 0 19 12"><path d="M0 0 H10.6 V1.2 L6.9 5.6 V11.6 H3.8 V5.6 L0 1.2 Z" fill="#3a3a3a"/><path d="M11.4 5.6 H18 L14.7 9 Z" fill="#555"/></svg><svg style="position:absolute;left:130.0px;top:535.75px" width="5" height="3.0" viewBox="0 0 5 3.0"><path d="M0 0 H5 L2.5 2.5 Z" fill="#222"/></svg><div class="t" style="left:1409px;top:527.6px;height:20px;line-height:20px;font-size:15.2px;color:#111;font-weight:bold;transform:scaleX(0.990);">Lab2022 | Long Wait</div><div style="left:8px;top:551.2px;width:1552px;height:322.4px;background:#f0f0f5;border:1.2px solid #111;box-sizing:border-box;"></div><div style="left:11px;top:553.8px;width:1526px;height:42px;background:#00508a;"></div><div style="left:10px;top:595.8px;width:1527.6px;height:1.2px;background:#8f9aa5;"></div><div style="left:133.9px;top:553.8px;width:2.2px;height:42px;background:#e3e9f0;"></div><div style="left:258.7px;top:553.8px;width:2.2px;height:42px;background:#e3e9f0;"></div><div style="left:383.7px;top:553.8px;width:2.2px;height:42px;background:#e3e9f0;"></div><div style="left:508.9px;top:553.8px;width:2.2px;height:42px;background:#e3e9f0;"></div><div style="left:633.9px;top:553.8px;width:2.2px;height:42px;background:#e3e9f0;"></div><div style="left:758.9px;top:553.8px;width:2.2px;height:42px;background:#e3e9f0;"></div><div style="left:883.5px;top:553.8px;width:2.2px;height:42px;background:#e3e9f0;"></div><div style="left:1008.6999999999999px;top:553.8px;width:2.2px;height:42px;background:#e3e9f0;"></div><div style="left:1133.7px;top:553.8px;width:2.2px;height:42px;background:#e3e9f0;"></div><div style="left:1258.6000000000001px;top:553.8px;width:2.2px;height:42px;background:#e3e9f0;"></div><div class="t" style="left:16.8px;top:565.8px;height:20px;line-height:20px;font-size:15.4px;color:#fff;transform:scaleX(0.965);">Start</div><div class="t" style="left:141.8px;top:565.8px;height:20px;line-height:20px;font-size:15.4px;color:#fff;transform:scaleX(0.910);">Finish</div><div class="t" style="left:266.3px;top:565.8px;height:20px;line-height:20px;font-size:15.4px;color:#fff;transform:scaleX(0.935);">Step ID</div><div class="t" style="left:391.3px;top:565.8px;height:20px;line-height:20px;font-size:15.4px;color:#fff;transform:scaleX(0.935);">Step Name</div><div class="t" style="left:516.5px;top:565.8px;height:20px;line-height:20px;font-size:15.4px;color:#fff;transform:scaleX(0.984);">Retries</div><div class="t" style="left:641.5px;top:565.8px;height:20px;line-height:20px;font-size:15.4px;color:#fff;transform:scaleX(0.910);">SQL Severity</div><div class="t" style="left:766.5px;top:565.8px;height:20px;line-height:20px;font-size:15.4px;color:#fff;transform:scaleX(0.960);">Outcome</div><div class="t" style="left:891.1px;top:565.8px;height:20px;line-height:20px;font-size:15.4px;color:#fff;transform:scaleX(0.951);">Duration (sec)</div><div class="t" style="left:1016.3px;top:565.8px;height:20px;line-height:20px;font-size:15.4px;color:#fff;transform:scaleX(0.962);">Duration</div><div class="t" style="left:1141.3px;top:565.8px;height:20px;line-height:20px;font-size:15.4px;color:#fff;transform:scaleX(0.901);">Message ID</div><div class="t" style="left:1266.2px;top:565.8px;height:20px;line-height:20px;font-size:15.4px;color:#fff;transform:scaleX(0.928);">Message</div><div style="left:1537.2px;top:552.6px;width:21.6px;height:320px;background:#f0f0f0;"></div><div style="left:1538.8px;top:573px;width:18.6px;height:22px;background:#cdcdcd;"></div><svg style="position:absolute;left:1543.5px;top:558.5px" width="10" height="8" viewBox="0 0 10 8"><path d="M0.8 6.5 L5 1.5 L9.2 6.5" fill="none" stroke="#444" stroke-width="1.7"/></svg><svg style="position:absolute;left:1543.5px;top:858.7px" width="10" height="8" viewBox="0 0 10 8"><path d="M0.8 1.5 L5 6.5 L9.2 1.5" fill="none" stroke="#444" stroke-width="1.7"/></svg><div class="w" style="left:10px;top:597px;width:1527.6px;height:275.4px"><div style="left:0px;top:0px;width:1527.6px;height:23px;background:#f1f1f6;"></div><div style="left:0px;top:0px;width:124px;height:23px;background:#d3d3d8;"></div><div style="left:749.6px;top:0px;width:124.4px;height:23px;background:#05683a;"></div><div style="left:0px;top:23px;width:1527.6px;height:1px;background:#9c9c9c;"></div><div class="t" style="left:3.8px;top:3.0px;height:20px;line-height:20px;font-size:15.4px;color:#23497a;font-style:italic;transform:scaleX(0.982);white-space:pre;">09/10/2023</div><div class="t" style="left:84.0px;top:3.0px;height:20px;line-height:20px;font-size:15.4px;color:#23497a;font-style:italic;transform:scaleX(0.898);white-space:pre;">08:47</div><div class="t" style="left:128.8px;top:3.0px;height:20px;line-height:20px;font-size:15.4px;color:#23497a;font-style:italic;transform:scaleX(0.982);white-space:pre;">09/10/2023</div><div class="t" style="left:209.0px;top:3.0px;height:20px;line-height:20px;font-size:15.4px;color:#23497a;font-style:italic;transform:scaleX(0.913);white-space:pre;">08:57</div><div class="t" style="left:254.8px;top:3.0px;height:20px;line-height:20px;font-size:15.4px;color:#23497a;font-style:italic;transform:scaleX(0.806);white-space:pre;">1</div><div class="t" style="left:378.40000000000003px;top:3.0px;height:20px;line-height:20px;font-size:15.4px;color:#23497a;font-style:italic;transform:scaleX(0.986);white-space:pre;">part1</div><div class="t" style="left:503.8px;top:3.0px;height:20px;line-height:20px;font-size:15.4px;color:#23497a;font-style:italic;transform:scaleX(1.051);white-space:pre;">0</div><div class="t" style="left:628.8px;top:3.0px;height:20px;line-height:20px;font-size:15.4px;color:#23497a;font-style:italic;transform:scaleX(1.051);white-space:pre;">0</div><div class="t" style="left:753.5999999999999px;top:3.0px;height:20px;line-height:20px;font-size:15.4px;color:#fff;font-style:italic;transform:scaleX(0.871);white-space:pre;">Succeeded</div><div class="t" style="left:879.5999999999999px;top:2.6px;height:20px;line-height:20px;font-size:15.4px;color:#23497a;font-style:italic;text-decoration:underline;transform:scaleX(0.957);white-space:pre;">600</div><div class="t" style="left:1004.5999999999999px;top:2.6px;height:20px;line-height:20px;font-size:15.4px;color:#23497a;font-style:italic;text-decoration:underline;transform:scaleX(0.922);white-space:pre;">00 00:10:00</div><div class="t" style="left:1128.6px;top:3.0px;height:20px;line-height:20px;font-size:15.4px;color:#23497a;font-style:italic;transform:scaleX(1.074);white-space:pre;">0</div><div class="t" style="left:1254.8px;top:2.6px;height:20px;line-height:20px;font-size:15.4px;color:#23497a;font-style:italic;text-decoration:underline;transform:scaleX(0.888);white-space:pre;">Executed as user: NT </div><div class="t" style="left:1389.3999999999999px;top:2.6px;height:20px;line-height:20px;font-size:15.4px;color:#23497a;font-style:italic;text-decoration:underline;transform:scaleX(0.798);white-space:pre;">SERVICE\SQLSERV...</div><div style="left:0px;top:24px;width:1527.6px;height:23px;background:#f1f1f6;"></div><div style="left:749.6px;top:24px;width:124.4px;height:23px;background:#05683a;"></div><div style="left:0px;top:47px;width:1527.6px;height:1px;background:#9c9c9c;"></div><div class="t" style="left:3.8px;top:26.6px;height:20px;line-height:20px;font-size:15.4px;color:#23497a;font-weight:bold;transform:scaleX(1.105);white-space:pre;">09/10/2023</div><div class="t" style="left:94.5px;top:26.6px;height:20px;line-height:20px;font-size:15.4px;color:#23497a;font-weight:bold;transform:scaleX(0.972);white-space:pre;">0...</div><div class="t" style="left:128.8px;top:26.6px;height:20px;line-height:20px;font-size:15.4px;color:#23497a;font-weight:bold;transform:scaleX(1.105);white-space:pre;">09/10/2023</div><div class="t" style="left:219.5px;top:26.6px;height:20px;line-height:20px;font-size:15.4px;color:#23497a;font-weight:bold;transform:scaleX(0.949);white-space:pre;">0...</div><div class="t" style="left:253.5px;top:26.6px;height:20px;line-height:20px;font-size:15.4px;color:#23497a;font-weight:bold;transform:scaleX(1.179);white-space:pre;">0</div><div class="t" style="left:379.3px;top:26.6px;height:20px;line-height:20px;font-size:15.4px;color:#23497a;font-weight:bold;transform:scaleX(0.965);white-space:pre;">(Job outcome)</div><div class="t" style="left:503.8px;top:26.6px;height:20px;line-height:20px;font-size:15.4px;color:#23497a;font-weight:bold;transform:scaleX(1.098);white-space:pre;">0</div><div class="t" style="left:628.8px;top:26.6px;height:20px;line-height:20px;font-size:15.4px;color:#23497a;font-weight:bold;transform:scaleX(1.098);white-space:pre;">0</div><div class="t" style="left:753.5999999999999px;top:26.6px;height:20px;line-height:20px;font-size:15.4px;color:#fff;font-weight:bold;transform:scaleX(0.906);white-space:pre;">Succeeded</div><div class="t" style="left:879.5999999999999px;top:26.0px;height:20px;line-height:20px;font-size:15.4px;color:#23497a;font-weight:bold;text-decoration:underline;transform:scaleX(1.065);white-space:pre;">1800</div><div class="t" style="left:1004.5999999999999px;top:26.0px;height:20px;line-height:20px;font-size:15.4px;color:#23497a;font-weight:bold;text-decoration:underline;transform:scaleX(1.019);white-space:pre;">00 00:30:00</div><div class="t" style="left:1128.6px;top:26.6px;height:20px;line-height:20px;font-size:15.4px;color:#23497a;font-weight:bold;transform:scaleX(1.098);white-space:pre;">0</div><div class="t" style="left:1254.8px;top:26.0px;height:20px;line-height:20px;font-size:15.4px;color:#23497a;font-weight:bold;text-decoration:underline;transform:scaleX(0.929);white-space:pre;">The job succeeded.  The Job was inv...</div><div style="left:0px;top:48px;width:1527.6px;height:23px;background:#f1f1f6;"></div><div style="left:749.6px;top:48px;width:124.4px;height:23px;background:#05683a;"></div><div style="left:0px;top:71px;width:1527.6px;height:1px;background:#9c9c9c;"></div><div class="t" style="left:3.8px;top:51.0px;height:20px;line-height:20px;font-size:15.4px;color:#23497a;font-style:italic;transform:scaleX(0.982);white-space:pre;">09/10/2023</div><div class="t" style="left:84.0px;top:51.0px;height:20px;line-height:20px;font-size:15.4px;color:#23497a;font-style:italic;transform:scaleX(0.898);white-space:pre;">08:36</div><div class="t" style="left:128.8px;top:51.0px;height:20px;line-height:20px;font-size:15.4px;color:#23497a;font-style:italic;transform:scaleX(0.982);white-space:pre;">09/10/2023</div><div class="t" style="left:209.0px;top:51.0px;height:20px;line-height:20px;font-size:15.4px;color:#23497a;font-style:italic;transform:scaleX(0.913);white-space:pre;">08:46</div><div class="t" style="left:254.2px;top:51.0px;height:20px;line-height:20px;font-size:15.4px;color:#23497a;font-style:italic;transform:scaleX(0.946);white-space:pre;">3</div><div class="t" style="left:378.40000000000003px;top:51.0px;height:20px;line-height:20px;font-size:15.4px;color:#23497a;font-style:italic;transform:scaleX(0.986);white-space:pre;">part3</div><div class="t" style="left:503.8px;top:51.0px;height:20px;line-height:20px;font-size:15.4px;color:#23497a;font-style:italic;transform:scaleX(1.051);white-space:pre;">0</div><div class="t" style="left:628.8px;top:51.0px;height:20px;line-height:20px;font-size:15.4px;color:#23497a;font-style:italic;transform:scaleX(1.051);white-space:pre;">0</div><div class="t" style="left:753.5999999999999px;top:51.0px;height:20px;line-height:20px;font-size:15.4px;color:#fff;font-style:italic;transform:scaleX(0.871);white-space:pre;">Succeeded</div><div class="t" style="left:879.5999999999999px;top:50.6px;height:20px;line-height:20px;font-size:15.4px;color:#23497a;font-style:italic;text-decoration:underline;transform:scaleX(0.957);white-space:pre;">600</div><div class="t" style="left:1004.5999999999999px;top:50.6px;height:20px;line-height:20px;font-size:15.4px;color:#23497a;font-style:italic;text-decoration:underline;transform:scaleX(0.922);white-space:pre;">00 00:10:00</div><div class="t" style="left:1128.6px;top:51.0px;height:20px;line-height:20px;font-size:15.4px;color:#23497a;font-style:italic;transform:scaleX(1.074);white-space:pre;">0</div><div class="t" style="left:1254.8px;top:50.6px;height:20px;line-height:20px;font-size:15.4px;color:#23497a;font-style:italic;text-decoration:underline;transform:scaleX(0.888);white-space:pre;">Executed as user: NT </div><div class="t" style="left:1389.3999999999999px;top:50.6px;height:20px;line-height:20px;font-size:15.4px;color:#23497a;font-style:italic;text-decoration:underline;transform:scaleX(0.798);white-space:pre;">SERVICE\SQLSERV...</div><div style="left:0px;top:72px;width:1527.6px;height:23px;background:#f1f1f6;"></div><div style="left:749.6px;top:72px;width:124.4px;height:23px;background:#05683a;"></div><div style="left:0px;top:95px;width:1527.6px;height:1px;background:#9c9c9c;"></div><div class="t" style="left:3.8px;top:75.0px;height:20px;line-height:20px;font-size:15.4px;color:#23497a;font-style:italic;transform:scaleX(0.982);white-space:pre;">09/10/2023</div><div class="t" style="left:84.0px;top:75.0px;height:20px;line-height:20px;font-size:15.4px;color:#23497a;font-style:italic;transform:scaleX(0.898);white-space:pre;">08:26</div><div class="t" style="left:128.8px;top:75.0px;height:20px;line-height:20px;font-size:15.4px;color:#23497a;font-style:italic;transform:scaleX(0.982);white-space:pre;">09/10/2023</div><div class="t" style="left:209.0px;top:75.0px;height:20px;line-height:20px;font-size:15.4px;color:#23497a;font-style:italic;transform:scaleX(0.913);white-space:pre;">08:36</div><div class="t" style="left:254.2px;top:75.0px;height:20px;line-height:20px;font-size:15.4px;color:#23497a;font-style:italic;transform:scaleX(0.946);white-space:pre;">2</div><div class="t" style="left:378.40000000000003px;top:75.0px;height:20px;line-height:20px;font-size:15.4px;color:#23497a;font-style:italic;transform:scaleX(0.986);white-space:pre;">part2</div><div class="t" style="left:503.8px;top:75.0px;height:20px;line-height:20px;font-size:15.4px;color:#23497a;font-style:italic;transform:scaleX(1.051);white-space:pre;">0</div><div class="t" style="left:628.8px;top:75.0px;height:20px;line-height:20px;font-size:15.4px;color:#23497a;font-style:italic;transform:scaleX(1.051);white-space:pre;">0</div><div class="t" style="left:753.5999999999999px;top:75.0px;height:20px;line-height:20px;font-size:15.4px;color:#fff;font-style:italic;transform:scaleX(0.871);white-space:pre;">Succeeded</div><div class="t" style="left:879.5999999999999px;top:74.6px;height:20px;line-height:20px;font-size:15.4px;color:#23497a;font-style:italic;text-decoration:underline;transform:scaleX(0.957);white-space:pre;">600</div><div class="t" style="left:1004.5999999999999px;top:74.6px;height:20px;line-height:20px;font-size:15.4px;color:#23497a;font-style:italic;text-decoration:underline;transform:scaleX(0.922);white-space:pre;">00 00:10:00</div><div class="t" style="left:1128.6px;top:75.0px;height:20px;line-height:20px;font-size:15.4px;color:#23497a;font-style:italic;transform:scaleX(1.074);white-space:pre;">0</div><div class="t" style="left:1254.8px;top:74.6px;height:20px;line-height:20px;font-size:15.4px;color:#23497a;font-style:italic;text-decoration:underline;transform:scaleX(0.888);white-space:pre;">Executed as user: NT </div><div class="t" style="left:1389.3999999999999px;top:74.6px;height:20px;line-height:20px;font-size:15.4px;color:#23497a;font-style:italic;text-decoration:underline;transform:scaleX(0.798);white-space:pre;">SERVICE\SQLSERV...</div><div style="left:0px;top:96px;width:1527.6px;height:23px;background:#f1f1f6;"></div><div style="left:749.6px;top:96px;width:124.4px;height:23px;background:#05683a;"></div><div style="left:0px;top:119px;width:1527.6px;height:1px;background:#9c9c9c;"></div><div class="t" style="left:3.8px;top:99.0px;height:20px;line-height:20px;font-size:15.4px;color:#23497a;font-style:italic;transform:scaleX(0.982);white-space:pre;">09/10/2023</div><div class="t" style="left:84.0px;top:99.0px;height:20px;line-height:20px;font-size:15.4px;color:#23497a;font-style:italic;transform:scaleX(0.898);white-space:pre;">08:16</div><div class="t" style="left:128.8px;top:99.0px;height:20px;line-height:20px;font-size:15.4px;color:#23497a;font-style:italic;transform:scaleX(0.982);white-space:pre;">09/10/2023</div><div class="t" style="left:209.0px;top:99.0px;height:20px;line-height:20px;font-size:15.4px;color:#23497a;font-style:italic;transform:scaleX(0.913);white-space:pre;">08:26</div><div class="t" style="left:254.8px;top:99.0px;height:20px;line-height:20px;font-size:15.4px;color:#23497a;font-style:italic;transform:scaleX(0.806);white-space:pre;">1</div><div class="t" style="left:378.40000000000003px;top:99.0px;height:20px;line-height:20px;font-size:15.4px;color:#23497a;font-style:italic;transform:scaleX(0.986);white-space:pre;">part1</div><div class="t" style="left:503.8px;top:99.0px;height:20px;line-height:20px;font-size:15.4px;color:#23497a;font-style:italic;transform:scaleX(1.051);white-space:pre;">0</div><div class="t" style="left:628.8px;top:99.0px;height:20px;line-height:20px;font-size:15.4px;color:#23497a;font-style:italic;transform:scaleX(1.051);white-space:pre;">0</div><div class="t" style="left:753.5999999999999px;top:99.0px;height:20px;line-height:20px;font-size:15.4px;color:#fff;font-style:italic;transform:scaleX(0.871);white-space:pre;">Succeeded</div><div class="t" style="left:879.5999999999999px;top:98.6px;height:20px;line-height:20px;font-size:15.4px;color:#23497a;font-style:italic;text-decoration:underline;transform:scaleX(0.957);white-space:pre;">600</div><div class="t" style="left:1004.5999999999999px;top:98.6px;height:20px;line-height:20px;font-size:15.4px;color:#23497a;font-style:italic;text-decoration:underline;transform:scaleX(0.922);white-space:pre;">00 00:10:00</div><div class="t" style="left:1128.6px;top:99.0px;height:20px;line-height:20px;font-size:15.4px;color:#23497a;font-style:italic;transform:scaleX(1.074);white-space:pre;">0</div><div class="t" style="left:1254.8px;top:98.6px;height:20px;line-height:20px;font-size:15.4px;color:#23497a;font-style:italic;text-decoration:underline;transform:scaleX(0.888);white-space:pre;">Executed as user: NT </div><div class="t" style="left:1389.3999999999999px;top:98.6px;height:20px;line-height:20px;font-size:15.4px;color:#23497a;font-style:italic;text-decoration:underline;transform:scaleX(0.798);white-space:pre;">SERVICE\SQLSERV...</div><div style="left:0px;top:120px;width:1527.6px;height:23px;background:#f1f1f6;"></div><div style="left:749.6px;top:120px;width:124.4px;height:23px;background:#05683a;"></div><div style="left:0px;top:143px;width:1527.6px;height:1px;background:#9c9c9c;"></div><div class="t" style="left:3.8px;top:122.6px;height:20px;line-height:20px;font-size:15.4px;color:#23497a;font-weight:bold;transform:scaleX(1.105);white-space:pre;">09/10/2023</div><div class="t" style="left:94.5px;top:122.6px;height:20px;line-height:20px;font-size:15.4px;color:#23497a;font-weight:bold;transform:scaleX(0.972);white-space:pre;">0...</div><div class="t" style="left:128.8px;top:122.6px;height:20px;line-height:20px;font-size:15.4px;color:#23497a;font-weight:bold;transform:scaleX(1.105);white-space:pre;">09/10/2023</div><div class="t" style="left:219.5px;top:122.6px;height:20px;line-height:20px;font-size:15.4px;color:#23497a;font-weight:bold;transform:scaleX(0.949);white-space:pre;">0...</div><div class="t" style="left:253.5px;top:122.6px;height:20px;line-height:20px;font-size:15.4px;color:#23497a;font-weight:bold;transform:scaleX(1.179);white-space:pre;">0</div><div class="t" style="left:379.3px;top:122.6px;height:20px;line-height:20px;font-size:15.4px;color:#23497a;font-weight:bold;transform:scaleX(0.965);white-space:pre;">(Job outcome)</div><div class="t" style="left:503.8px;top:122.6px;height:20px;line-height:20px;font-size:15.4px;color:#23497a;font-weight:bold;transform:scaleX(1.098);white-space:pre;">0</div><div class="t" style="left:628.8px;top:122.6px;height:20px;line-height:20px;font-size:15.4px;color:#23497a;font-weight:bold;transform:scaleX(1.098);white-space:pre;">0</div><div class="t" style="left:753.5999999999999px;top:122.6px;height:20px;line-height:20px;font-size:15.4px;color:#fff;font-weight:bold;transform:scaleX(0.906);white-space:pre;">Succeeded</div><div class="t" style="left:879.5999999999999px;top:122.0px;height:20px;line-height:20px;font-size:15.4px;color:#23497a;font-weight:bold;text-decoration:underline;transform:scaleX(1.065);white-space:pre;">1800</div><div class="t" style="left:1004.5999999999999px;top:122.0px;height:20px;line-height:20px;font-size:15.4px;color:#23497a;font-weight:bold;text-decoration:underline;transform:scaleX(1.019);white-space:pre;">00 00:30:00</div><div class="t" style="left:1128.6px;top:122.6px;height:20px;line-height:20px;font-size:15.4px;color:#23497a;font-weight:bold;transform:scaleX(1.098);white-space:pre;">0</div><div class="t" style="left:1254.8px;top:122.0px;height:20px;line-height:20px;font-size:15.4px;color:#23497a;font-weight:bold;text-decoration:underline;transform:scaleX(0.929);white-space:pre;">The job succeeded.  The Job was inv...</div><div style="left:0px;top:144px;width:1527.6px;height:23px;background:#f1f1f6;"></div><div style="left:749.6px;top:144px;width:124.4px;height:23px;background:#05683a;"></div><div style="left:0px;top:167px;width:1527.6px;height:1px;background:#9c9c9c;"></div><div class="t" style="left:3.8px;top:147.0px;height:20px;line-height:20px;font-size:15.4px;color:#23497a;font-style:italic;transform:scaleX(0.982);white-space:pre;">09/10/2023</div><div class="t" style="left:84.0px;top:147.0px;height:20px;line-height:20px;font-size:15.4px;color:#23497a;font-style:italic;transform:scaleX(0.898);white-space:pre;">08:05</div><div class="t" style="left:128.8px;top:147.0px;height:20px;line-height:20px;font-size:15.4px;color:#23497a;font-style:italic;transform:scaleX(0.982);white-space:pre;">09/10/2023</div><div class="t" style="left:209.0px;top:147.0px;height:20px;line-height:20px;font-size:15.4px;color:#23497a;font-style:italic;transform:scaleX(0.913);white-space:pre;">08:15</div><div class="t" style="left:254.2px;top:147.0px;height:20px;line-height:20px;font-size:15.4px;color:#23497a;font-style:italic;transform:scaleX(0.946);white-space:pre;">3</div><div class="t" style="left:378.40000000000003px;top:147.0px;height:20px;line-height:20px;font-size:15.4px;color:#23497a;font-style:italic;transform:scaleX(0.986);white-space:pre;">part3</div><div class="t" style="left:503.8px;top:147.0px;height:20px;line-height:20px;font-size:15.4px;color:#23497a;font-style:italic;transform:scaleX(1.051);white-space:pre;">0</div><div class="t" style="left:628.8px;top:147.0px;height:20px;line-height:20px;font-size:15.4px;color:#23497a;font-style:italic;transform:scaleX(1.051);white-space:pre;">0</div><div class="t" style="left:753.5999999999999px;top:147.0px;height:20px;line-height:20px;font-size:15.4px;color:#fff;font-style:italic;transform:scaleX(0.871);white-space:pre;">Succeeded</div><div class="t" style="left:879.5999999999999px;top:146.6px;height:20px;line-height:20px;font-size:15.4px;color:#23497a;font-style:italic;text-decoration:underline;transform:scaleX(0.957);white-space:pre;">600</div><div class="t" style="left:1004.5999999999999px;top:146.6px;height:20px;line-height:20px;font-size:15.4px;color:#23497a;font-style:italic;text-decoration:underline;transform:scaleX(0.922);white-space:pre;">00 00:10:00</div><div class="t" style="left:1128.6px;top:147.0px;height:20px;line-height:20px;font-size:15.4px;color:#23497a;font-style:italic;transform:scaleX(1.074);white-space:pre;">0</div><div class="t" style="left:1254.8px;top:146.6px;height:20px;line-height:20px;font-size:15.4px;color:#23497a;font-style:italic;text-decoration:underline;transform:scaleX(0.888);white-space:pre;">Executed as user: NT </div><div class="t" style="left:1389.3999999999999px;top:146.6px;height:20px;line-height:20px;font-size:15.4px;color:#23497a;font-style:italic;text-decoration:underline;transform:scaleX(0.798);white-space:pre;">SERVICE\SQLSERV...</div><div style="left:0px;top:168px;width:1527.6px;height:23px;background:#f1f1f6;"></div><div style="left:749.6px;top:168px;width:124.4px;height:23px;background:#05683a;"></div><div style="left:0px;top:191px;width:1527.6px;height:1px;background:#9c9c9c;"></div><div class="t" style="left:3.8px;top:171.0px;height:20px;line-height:20px;font-size:15.4px;color:#23497a;font-style:italic;transform:scaleX(0.982);white-space:pre;">09/10/2023</div><div class="t" style="left:84.0px;top:171.0px;height:20px;line-height:20px;font-size:15.4px;color:#23497a;font-style:italic;transform:scaleX(0.898);white-space:pre;">07:55</div><div class="t" style="left:128.8px;top:171.0px;height:20px;line-height:20px;font-size:15.4px;color:#23497a;font-style:italic;transform:scaleX(0.982);white-space:pre;">09/10/2023</div><div class="t" style="left:209.0px;top:171.0px;height:20px;line-height:20px;font-size:15.4px;color:#23497a;font-style:italic;transform:scaleX(0.913);white-space:pre;">08:05</div><div class="t" style="left:254.2px;top:171.0px;height:20px;line-height:20px;font-size:15.4px;color:#23497a;font-style:italic;transform:scaleX(0.946);white-space:pre;">2</div><div class="t" style="left:378.40000000000003px;top:171.0px;height:20px;line-height:20px;font-size:15.4px;color:#23497a;font-style:italic;transform:scaleX(0.986);white-space:pre;">part2</div><div class="t" style="left:503.8px;top:171.0px;height:20px;line-height:20px;font-size:15.4px;color:#23497a;font-style:italic;transform:scaleX(1.051);white-space:pre;">0</div><div class="t" style="left:628.8px;top:171.0px;height:20px;line-height:20px;font-size:15.4px;color:#23497a;font-style:italic;transform:scaleX(1.051);white-space:pre;">0</div><div class="t" style="left:753.5999999999999px;top:171.0px;height:20px;line-height:20px;font-size:15.4px;color:#fff;font-style:italic;transform:scaleX(0.871);white-space:pre;">Succeeded</div><div class="t" style="left:879.5999999999999px;top:170.6px;height:20px;line-height:20px;font-size:15.4px;color:#23497a;font-style:italic;text-decoration:underline;transform:scaleX(0.957);white-space:pre;">600</div><div class="t" style="left:1004.5999999999999px;top:170.6px;height:20px;line-height:20px;font-size:15.4px;color:#23497a;font-style:italic;text-decoration:underline;transform:scaleX(0.922);white-space:pre;">00 00:10:00</div><div class="t" style="left:1128.6px;top:171.0px;height:20px;line-height:20px;font-size:15.4px;color:#23497a;font-style:italic;transform:scaleX(1.074);white-space:pre;">0</div><div class="t" style="left:1254.8px;top:170.6px;height:20px;line-height:20px;font-size:15.4px;color:#23497a;font-style:italic;text-decoration:underline;transform:scaleX(0.888);white-space:pre;">Executed as user: NT </div><div class="t" style="left:1389.3999999999999px;top:170.6px;height:20px;line-height:20px;font-size:15.4px;color:#23497a;font-style:italic;text-decoration:underline;transform:scaleX(0.798);white-space:pre;">SERVICE\SQLSERV...</div><div style="left:0px;top:192px;width:1527.6px;height:23px;background:#f1f1f6;"></div><div style="left:749.6px;top:192px;width:124.4px;height:23px;background:#05683a;"></div><div style="left:0px;top:215px;width:1527.6px;height:1px;background:#9c9c9c;"></div><div class="t" style="left:3.8px;top:195.0px;height:20px;line-height:20px;font-size:15.4px;color:#23497a;font-style:italic;transform:scaleX(0.982);white-space:pre;">09/10/2023</div><div class="t" style="left:84.0px;top:195.0px;height:20px;line-height:20px;font-size:15.4px;color:#23497a;font-style:italic;transform:scaleX(0.898);white-space:pre;">07:45</div><div class="t" style="left:128.8px;top:195.0px;height:20px;line-height:20px;font-size:15.4px;color:#23497a;font-style:italic;transform:scaleX(0.982);white-space:pre;">09/10/2023</div><div class="t" style="left:209.0px;top:195.0px;height:20px;line-height:20px;font-size:15.4px;color:#23497a;font-style:italic;transform:scaleX(0.913);white-space:pre;">07:55</div><div class="t" style="left:254.8px;top:195.0px;height:20px;line-height:20px;font-size:15.4px;color:#23497a;font-style:italic;transform:scaleX(0.806);white-space:pre;">1</div><div class="t" style="left:378.40000000000003px;top:195.0px;height:20px;line-height:20px;font-size:15.4px;color:#23497a;font-style:italic;transform:scaleX(0.986);white-space:pre;">part1</div><div class="t" style="left:503.8px;top:195.0px;height:20px;line-height:20px;font-size:15.4px;color:#23497a;font-style:italic;transform:scaleX(1.051);white-space:pre;">0</div><div class="t" style="left:628.8px;top:195.0px;height:20px;line-height:20px;font-size:15.4px;color:#23497a;font-style:italic;transform:scaleX(1.051);white-space:pre;">0</div><div class="t" style="left:753.5999999999999px;top:195.0px;height:20px;line-height:20px;font-size:15.4px;color:#fff;font-style:italic;transform:scaleX(0.871);white-space:pre;">Succeeded</div><div class="t" style="left:879.5999999999999px;top:194.6px;height:20px;line-height:20px;font-size:15.4px;color:#23497a;font-style:italic;text-decoration:underline;transform:scaleX(0.957);white-space:pre;">600</div><div class="t" style="left:1004.5999999999999px;top:194.6px;height:20px;line-height:20px;font-size:15.4px;color:#23497a;font-style:italic;text-decoration:underline;transform:scaleX(0.922);white-space:pre;">00 00:10:00</div><div class="t" style="left:1128.6px;top:195.0px;height:20px;line-height:20px;font-size:15.4px;color:#23497a;font-style:italic;transform:scaleX(1.074);white-space:pre;">0</div><div class="t" style="left:1254.8px;top:194.6px;height:20px;line-height:20px;font-size:15.4px;color:#23497a;font-style:italic;text-decoration:underline;transform:scaleX(0.888);white-space:pre;">Executed as user: NT </div><div class="t" style="left:1389.3999999999999px;top:194.6px;height:20px;line-height:20px;font-size:15.4px;color:#23497a;font-style:italic;text-decoration:underline;transform:scaleX(0.798);white-space:pre;">SERVICE\SQLSERV...</div><div style="left:0px;top:216px;width:1527.6px;height:23px;background:#f1f1f6;"></div><div style="left:749.6px;top:216px;width:124.4px;height:23px;background:#05683a;"></div><div style="left:0px;top:239px;width:1527.6px;height:1px;background:#9c9c9c;"></div><div class="t" style="left:3.8px;top:218.6px;height:20px;line-height:20px;font-size:15.4px;color:#23497a;font-weight:bold;transform:scaleX(1.105);white-space:pre;">09/10/2023</div><div class="t" style="left:94.5px;top:218.6px;height:20px;line-height:20px;font-size:15.4px;color:#23497a;font-weight:bold;transform:scaleX(0.972);white-space:pre;">0...</div><div class="t" style="left:128.8px;top:218.6px;height:20px;line-height:20px;font-size:15.4px;color:#23497a;font-weight:bold;transform:scaleX(1.105);white-space:pre;">09/10/2023</div><div class="t" style="left:219.5px;top:218.6px;height:20px;line-height:20px;font-size:15.4px;color:#23497a;font-weight:bold;transform:scaleX(0.949);white-space:pre;">0...</div><div class="t" style="left:253.5px;top:218.6px;height:20px;line-height:20px;font-size:15.4px;color:#23497a;font-weight:bold;transform:scaleX(1.179);white-space:pre;">0</div><div class="t" style="left:379.3px;top:218.6px;height:20px;line-height:20px;font-size:15.4px;color:#23497a;font-weight:bold;transform:scaleX(0.965);white-space:pre;">(Job outcome)</div><div class="t" style="left:503.8px;top:218.6px;height:20px;line-height:20px;font-size:15.4px;color:#23497a;font-weight:bold;transform:scaleX(1.098);white-space:pre;">0</div><div class="t" style="left:628.8px;top:218.6px;height:20px;line-height:20px;font-size:15.4px;color:#23497a;font-weight:bold;transform:scaleX(1.098);white-space:pre;">0</div><div class="t" style="left:753.5999999999999px;top:218.6px;height:20px;line-height:20px;font-size:15.4px;color:#fff;font-weight:bold;transform:scaleX(0.906);white-space:pre;">Succeeded</div><div class="t" style="left:879.5999999999999px;top:218.0px;height:20px;line-height:20px;font-size:15.4px;color:#23497a;font-weight:bold;text-decoration:underline;transform:scaleX(1.065);white-space:pre;">1800</div><div class="t" style="left:1004.5999999999999px;top:218.0px;height:20px;line-height:20px;font-size:15.4px;color:#23497a;font-weight:bold;text-decoration:underline;transform:scaleX(1.019);white-space:pre;">00 00:30:00</div><div class="t" style="left:1128.6px;top:218.6px;height:20px;line-height:20px;font-size:15.4px;color:#23497a;font-weight:bold;transform:scaleX(1.098);white-space:pre;">0</div><div class="t" style="left:1254.8px;top:218.0px;height:20px;line-height:20px;font-size:15.4px;color:#23497a;font-weight:bold;text-decoration:underline;transform:scaleX(0.929);white-space:pre;">The job succeeded.  The Job was inv...</div><div style="left:0px;top:240px;width:1527.6px;height:23px;background:#f1f1f6;"></div><div style="left:749.6px;top:240px;width:124.4px;height:23px;background:#05683a;"></div><div style="left:0px;top:263px;width:1527.6px;height:1px;background:#9c9c9c;"></div><div class="t" style="left:3.8px;top:243.0px;height:20px;line-height:20px;font-size:15.4px;color:#23497a;font-style:italic;transform:scaleX(0.982);white-space:pre;">09/10/2023</div><div class="t" style="left:84.0px;top:243.0px;height:20px;line-height:20px;font-size:15.4px;color:#23497a;font-style:italic;transform:scaleX(0.898);white-space:pre;">07:34</div><div class="t" style="left:128.8px;top:243.0px;height:20px;line-height:20px;font-size:15.4px;color:#23497a;font-style:italic;transform:scaleX(0.982);white-space:pre;">09/10/2023</div><div class="t" style="left:209.0px;top:243.0px;height:20px;line-height:20px;font-size:15.4px;color:#23497a;font-style:italic;transform:scaleX(0.913);white-space:pre;">07:44</div><div class="t" style="left:254.2px;top:243.0px;height:20px;line-height:20px;font-size:15.4px;color:#23497a;font-style:italic;transform:scaleX(0.946);white-space:pre;">3</div><div class="t" style="left:378.40000000000003px;top:243.0px;height:20px;line-height:20px;font-size:15.4px;color:#23497a;font-style:italic;transform:scaleX(0.986);white-space:pre;">part3</div><div class="t" style="left:503.8px;top:243.0px;height:20px;line-height:20px;font-size:15.4px;color:#23497a;font-style:italic;transform:scaleX(1.051);white-space:pre;">0</div><div class="t" style="left:628.8px;top:243.0px;height:20px;line-height:20px;font-size:15.4px;color:#23497a;font-style:italic;transform:scaleX(1.051);white-space:pre;">0</div><div class="t" style="left:753.5999999999999px;top:243.0px;height:20px;line-height:20px;font-size:15.4px;color:#fff;font-style:italic;transform:scaleX(0.871);white-space:pre;">Succeeded</div><div class="t" style="left:879.5999999999999px;top:242.6px;height:20px;line-height:20px;font-size:15.4px;color:#23497a;font-style:italic;text-decoration:underline;transform:scaleX(0.957);white-space:pre;">600</div><div class="t" style="left:1004.5999999999999px;top:242.6px;height:20px;line-height:20px;font-size:15.4px;color:#23497a;font-style:italic;text-decoration:underline;transform:scaleX(0.922);white-space:pre;">00 00:10:00</div><div class="t" style="left:1128.6px;top:243.0px;height:20px;line-height:20px;font-size:15.4px;color:#23497a;font-style:italic;transform:scaleX(1.074);white-space:pre;">0</div><div class="t" style="left:1254.8px;top:242.6px;height:20px;line-height:20px;font-size:15.4px;color:#23497a;font-style:italic;text-decoration:underline;transform:scaleX(0.888);white-space:pre;">Executed as user: NT </div><div class="t" style="left:1389.3999999999999px;top:242.6px;height:20px;line-height:20px;font-size:15.4px;color:#23497a;font-style:italic;text-decoration:underline;transform:scaleX(0.798);white-space:pre;">SERVICE\SQLSERV...</div><div style="left:0px;top:264px;width:1527.6px;height:23px;background:#f1f1f6;"></div><div style="left:749.6px;top:264px;width:124.4px;height:23px;background:#05683a;"></div><div style="left:0px;top:287px;width:1527.6px;height:1px;background:#9c9c9c;"></div><div class="t" style="left:3.8px;top:267.0px;height:20px;line-height:20px;font-size:15.4px;color:#23497a;font-style:italic;transform:scaleX(0.982);white-space:pre;">09/10/2023</div><div class="t" style="left:84.0px;top:267.0px;height:20px;line-height:20px;font-size:15.4px;color:#23497a;font-style:italic;transform:scaleX(0.898);white-space:pre;">07:24</div><div class="t" style="left:128.8px;top:267.0px;height:20px;line-height:20px;font-size:15.4px;color:#23497a;font-style:italic;transform:scaleX(0.982);white-space:pre;">09/10/2023</div><div class="t" style="left:209.0px;top:267.0px;height:20px;line-height:20px;font-size:15.4px;color:#23497a;font-style:italic;transform:scaleX(0.913);white-space:pre;">07:34</div><div class="t" style="left:254.2px;top:267.0px;height:20px;line-height:20px;font-size:15.4px;color:#23497a;font-style:italic;transform:scaleX(0.946);white-space:pre;">2</div><div class="t" style="left:378.40000000000003px;top:267.0px;height:20px;line-height:20px;font-size:15.4px;color:#23497a;font-style:italic;transform:scaleX(0.986);white-space:pre;">part2</div><div class="t" style="left:503.8px;top:267.0px;height:20px;line-height:20px;font-size:15.4px;color:#23497a;font-style:italic;transform:scaleX(1.051);white-space:pre;">0</div><div class="t" style="left:628.8px;top:267.0px;height:20px;line-height:20px;font-size:15.4px;color:#23497a;font-style:italic;transform:scaleX(1.051);white-space:pre;">0</div><div class="t" style="left:753.5999999999999px;top:267.0px;height:20px;line-height:20px;font-size:15.4px;color:#fff;font-style:italic;transform:scaleX(0.871);white-space:pre;">Succeeded</div><div class="t" style="left:879.5999999999999px;top:266.6px;height:20px;line-height:20px;font-size:15.4px;color:#23497a;font-style:italic;text-decoration:underline;transform:scaleX(0.957);white-space:pre;">600</div><div class="t" style="left:1004.5999999999999px;top:266.6px;height:20px;line-height:20px;font-size:15.4px;color:#23497a;font-style:italic;text-decoration:underline;transform:scaleX(0.922);white-space:pre;">00 00:10:00</div><div class="t" style="left:1128.6px;top:267.0px;height:20px;line-height:20px;font-size:15.4px;color:#23497a;font-style:italic;transform:scaleX(1.074);white-space:pre;">0</div><div class="t" style="left:1254.8px;top:266.6px;height:20px;line-height:20px;font-size:15.4px;color:#23497a;font-style:italic;text-decoration:underline;transform:scaleX(0.888);white-space:pre;">Executed as user: NT </div><div class="t" style="left:1389.3999999999999px;top:266.6px;height:20px;line-height:20px;font-size:15.4px;color:#23497a;font-style:italic;text-decoration:underline;transform:scaleX(0.798);white-space:pre;">SERVICE\SQLSERV...</div><div style="left:124px;top:0px;width:1px;height:277px;background:#9c9c9c;"></div><div style="left:248.8px;top:0px;width:1px;height:277px;background:#9c9c9c;"></div><div style="left:373.8px;top:0px;width:1px;height:277px;background:#9c9c9c;"></div><div style="left:499px;top:0px;width:1px;height:277px;background:#9c9c9c;"></div><div style="left:624px;top:0px;width:1px;height:277px;background:#9c9c9c;"></div><div style="left:749px;top:0px;width:1px;height:277px;background:#9c9c9c;"></div><div style="left:873.6px;top:0px;width:1px;height:277px;background:#9c9c9c;"></div><div style="left:998.8px;top:0px;width:1px;height:277px;background:#9c9c9c;"></div><div style="left:1123.8px;top:0px;width:1px;height:277px;background:#9c9c9c;"></div><div style="left:1248.7px;top:0px;width:1px;height:277px;background:#9c9c9c;"></div></div>
<div style="left:233px;top:307px;width:1164.5px;height:490px;background:#f0f0f0;border:1px solid #444;box-sizing:border-box;box-shadow:0 1px 3px rgba(0,0,0,0.12);"></div><div style="left:234px;top:308px;width:1162.5px;height:65px;background:linear-gradient(#fff 0,#fff 55%,#ececec 100%);"></div><svg style="position:absolute;left:244.8px;top:319px" width="16" height="13" viewBox="0 0 16 13"><rect x="7.1" y="0" width="8.2" height="8.1" fill="#404040"/><rect x="0" y="5.2" width="4.8" height="6.7" fill="#404040"/><rect x="6.7" y="10" width="6.2" height="2.8" fill="#404040"/></svg><div class="t" style="left:268.5px;top:316.7px;height:20px;line-height:20px;font-size:15.5px;color:#111;transform:scaleX(0.933);">Running Queries Viewer</div><div style="left:1244px;top:325px;width:13px;height:1.4px;background:#111;"></div><div style="left:1301.5px;top:320px;width:12px;height:12px;border:1.4px solid #111;box-sizing:border-box;"></div><svg style="position:absolute;left:1360.5px;top:319.5px" width="13" height="13" viewBox="0 0 13 13"><path d="M0.7 0.7 L12.3 12.3 M12.3 0.7 L0.7 12.3" stroke="#111" stroke-width="1.4"/></svg><svg style="position:absolute;left:238px;top:350px" width="3" height="16" viewBox="0 0 3 16"><rect x="0" y="0" width="2" height="2" fill="#a4a4b0"/><rect x="1" y="1" width="1.5" height="1.5" fill="#fff"/><rect x="0" y="4" width="2" height="2" fill="#a4a4b0"/><rect x="1" y="5" width="1.5" height="1.5" fill="#fff"/><rect x="0" y="8" width="2" height="2" fill="#a4a4b0"/><rect x="1" y="9" width="1.5" height="1.5" fill="#fff"/><rect x="0" y="12" width="2" height="2" fill="#a4a4b0"/><rect x="1" y="13" width="1.5" height="1.5" fill="#fff"/></svg><svg style="position:absolute;left:250px;top:348px" width="16" height="20" viewBox="0 0 16 20"><path d="M0.8 9.6 C0.8 5 4 2.6 8.4 2.6 L8.4 0.2 L15.4 4.6 L8.4 9 L8.4 6.6 C6.2 6.6 4.8 7.6 4.4 9.6 Z" fill="#52c531" stroke="#36a21f" stroke-width="0.7"/>
<path d="M15.2 10.4 C15.2 15 12 17.4 7.6 17.4 L7.6 19.8 L0.6 15.4 L7.6 11 L7.6 13.4 C9.8 13.4 11.2 12.4 11.6 10.4 Z" fill="#52c531" stroke="#36a21f" stroke-width="0.7"/></svg><svg style="position:absolute;left:277.0px;top:348px" width="19" height="20" viewBox="0 0 19 20"><path d="M0.9 0.9 H9.6 V15 H0.9 Z" fill="#eef3fd" stroke="#2b7fe0" stroke-width="1.7"/>
<path d="M6.6 5 H13.6 L18 9.4 V19 H6.6 Z" fill="#eef3fd" stroke="#2b7fe0" stroke-width="1.7"/>
<path d="M13.4 5.2 V9.6 H17.8" fill="none" stroke="#2b7fe0" stroke-width="1.3"/></svg><svg style="position:absolute;left:306px;top:348px" width="20" height="20" viewBox="0 0 20 20"><path d="M5.5 1.2 H16 L19.5 4.6 V19.2 H5.5 Z" fill="#e3ebf7" stroke="#5674a6" stroke-width="1"/>
<path d="M16 1.2 V4.6 H19.5" fill="#c9d6ea" stroke="#5674a6" stroke-width="0.8"/>
<path d="M11.5 7.5 H18 M11.5 10.5 H18 M7 13.5 H18 M7 16.5 H18 M14.5 5.5 V18.5 M10.5 13 V18.5" stroke="#8ea6cc" stroke-width="0.9"/>
<rect x="0.4" y="1" width="11.4" height="11.6" fill="#2a8a35" stroke="#1b6b28" stroke-width="0.6"/>
<rect x="4" y="2.4" width="7" height="8.8" fill="#cfe9c9"/>
<path d="M5 3.6 L10 10 M10 3.6 L5 10" stroke="#1e7a2c" stroke-width="1.8"/></svg><svg style="position:absolute;left:339.0px;top:348.5px" width="11" height="18" viewBox="0 0 11 18"><rect x="1" y="1" width="9" height="16" fill="#ececec" stroke="#484848" stroke-width="2"/>
<path d="M1 6.3 H10 M1 11.7 H10" stroke="#484848" stroke-width="1.7"/></svg><svg style="position:absolute;left:363.5px;top:349px" width="20" height="18" viewBox="0 0 20 18"><path d="M18 9 H3 M9.5 2 L2.5 9 L9.5 16" fill="none" stroke="#a0a0a0" stroke-width="2.6"/></svg><div class="t" style="left:395px;top:348.5px;height:20px;line-height:20px;font-size:15.5px;color:#222;transform:scaleX(0.932);">Group By</div><svg style="position:absolute;left:464.0px;top:357.25px" width="5" height="3.0" viewBox="0 0 5 3.0"><path d="M0 0 H5 L2.5 2.5 Z" fill="#222"/></svg><div style="left:234.3px;top:372px;width:1163.2px;height:402.3px;background:#f0f0f5;border:1.3px solid #111;box-sizing:border-box;"></div><div style="left:237px;top:375.3px;width:1138.2px;height:65.9px;background:#00508a;"></div><div style="left:298.9px;top:376px;width:2.2px;height:65px;background:#e3e9f0;"></div><div style="left:358.9px;top:376px;width:2.2px;height:65px;background:#e3e9f0;"></div><div style="left:558.9px;top:376px;width:2.2px;height:65px;background:#e3e9f0;"></div><div style="left:758.9px;top:376px;width:2.2px;height:65px;background:#e3e9f0;"></div><div style="left:848.9px;top:376px;width:2.2px;height:65px;background:#e3e9f0;"></div><div style="left:908.9px;top:376px;width:2.2px;height:65px;background:#e3e9f0;"></div><div style="left:1005.9px;top:376px;width:2.2px;height:65px;background:#e3e9f0;"></div><div style="left:1065.9px;top:376px;width:2.2px;height:65px;background:#e3e9f0;"></div><div style="left:1125.9px;top:376px;width:2.2px;height:65px;background:#e3e9f0;"></div><div style="left:1185.9px;top:376px;width:2.2px;height:65px;background:#e3e9f0;"></div><div style="left:1245.9px;top:376px;width:2.2px;height:65px;background:#e3e9f0;"></div><div style="left:1305.9px;top:376px;width:2.2px;height:65px;background:#e3e9f0;"></div><div style="left:1365.9px;top:376px;width:2.2px;height:65px;background:#e3e9f0;"></div><div style="left:237px;top:441px;width:1138.2px;height:1px;background:#b4bcc4;"></div><div class="t" style="left:241.8px;top:399.2px;height:19px;line-height:19px;font-size:14.3px;color:#fff;transform:scaleX(0.927);">Instance</div><div class="t" style="left:305.7px;top:391.4px;height:19px;line-height:19px;font-size:14.3px;color:#fff;transform:scaleX(0.977);">Session</div><div class="t" style="left:305.7px;top:407.4px;height:19px;line-height:19px;font-size:14.3px;color:#fff;transform:scaleX(0.902);">ID</div><div class="t" style="left:365.9px;top:399.2px;height:19px;line-height:19px;font-size:14.3px;color:#fff;transform:scaleX(0.967);">Batch Text</div><div class="t" style="left:566.1999999999999px;top:399.2px;height:19px;line-height:19px;font-size:14.3px;color:#fff;transform:scaleX(1.056);">Text</div><div class="t" style="left:766.0px;top:399.2px;height:19px;line-height:19px;font-size:14.3px;color:#fff;transform:scaleX(0.947);">Plan</div><div class="t" style="left:856.0px;top:383.4px;height:19px;line-height:19px;font-size:14.3px;color:#fff;transform:scaleX(0.955);">Blocking</div><div class="t" style="left:856.0px;top:399.2px;height:19px;line-height:19px;font-size:14.3px;color:#fff;transform:scaleX(0.965);">Session</div><div class="t" style="left:856.0px;top:415.3px;height:19px;line-height:19px;font-size:14.3px;color:#fff;transform:scaleX(0.874);">ID</div><div class="t" style="left:915.6px;top:399.2px;height:19px;line-height:19px;font-size:14.3px;color:#fff;transform:scaleX(0.936);">Duration</div><div class="t" style="left:1012.9px;top:391.4px;height:19px;line-height:19px;font-size:14.3px;color:#fff;transform:scaleX(0.927);">Duration</div><div class="t" style="left:1012.9px;top:407.4px;height:19px;line-height:19px;font-size:14.3px;color:#fff;transform:scaleX(0.910);">(ms)</div><div class="t" style="left:1072.7px;top:391.4px;height:19px;line-height:19px;font-size:14.3px;color:#fff;transform:scaleX(0.944);">CPU</div><div class="t" style="left:1074.0px;top:407.4px;height:19px;line-height:19px;font-size:14.3px;color:#fff;transform:scaleX(0.947);">Time</div><div class="t" style="left:1132.8000000000002px;top:391.4px;height:19px;line-height:19px;font-size:14.3px;color:#fff;transform:scaleX(0.991);">Logical</div><div class="t" style="left:1132.8000000000002px;top:407.4px;height:19px;line-height:19px;font-size:14.3px;color:#fff;transform:scaleX(0.992);">Reads</div><div class="t" style="left:1192.9px;top:399.2px;height:19px;line-height:19px;font-size:14.3px;color:#fff;transform:scaleX(0.992);">Reads</div><div class="t" style="left:1253.0px;top:399.2px;height:19px;line-height:19px;font-size:14.3px;color:#fff;transform:scaleX(0.934);">Writes</div><div class="t" style="left:1313.1000000000001px;top:375.3px;height:19px;line-height:19px;font-size:14.3px;color:#fff;transform:scaleX(0.931);">Granted</div><div class="t" style="left:1313.1000000000001px;top:391.4px;height:19px;line-height:19px;font-size:14.3px;color:#fff;transform:scaleX(0.917);">Query</div><div class="t" style="left:1313.1000000000001px;top:407.4px;height:19px;line-height:19px;font-size:14.3px;color:#fff;transform:scaleX(0.955);">Memory</div><div class="t" style="left:1313.1000000000001px;top:423.3px;height:19px;line-height:19px;font-size:14.3px;color:#fff;transform:scaleX(0.899);">(Kb)</div><div class="w" style="left:1368px;top:376px;width:7.2px;height:64px"><div class="t" style="left:5px;top:22.7px;height:19px;line-height:19px;font-size:14.3px;color:#fff;transform:scaleX(0.920);">Current</div></div><div class="w" style="left:236px;top:442px;width:1139.2px;height:310.5px"><div style="left:0px;top:0px;width:1139.2px;height:23px;background:#f1f1f6;"></div><div style="left:0px;top:0px;width:63.3px;height:23px;background:#d3d3d8;"></div><div style="left:614.3px;top:0px;width:58.8px;height:23px;background:#05683a;"></div><div style="left:0px;top:23px;width:1139.2px;height:1px;background:#9c9c9c;"></div><div class="t" style="left:3.5999999999999943px;top:2.2px;height:19px;line-height:19px;font-size:14.6px;color:#23497a;text-decoration:underline;transform:scaleX(0.884);">LAB2012</div><div class="t" style="left:67.5px;top:2.2px;height:19px;line-height:19px;font-size:14.6px;color:#23497a;text-decoration:underline;transform:scaleX(0.862);">53</div><div class="t" style="left:127.69999999999999px;top:2.2px;height:19px;line-height:19px;font-size:14.6px;color:#23497a;text-decoration:underline;transform:scaleX(0.897);">WAITFOR DELAY '00:10:00'</div><div class="t" style="left:327.70000000000005px;top:2.2px;height:19px;line-height:19px;font-size:14.6px;color:#23497a;text-decoration:underline;transform:scaleX(0.901);">WAITFOR DELAY '00:10:00'</div><div class="t" style="left:528.0px;top:2.2px;height:19px;line-height:19px;font-size:14.6px;color:#23497a;text-decoration:underline;transform:scaleX(0.900);">Find Plan</div><div class="t" style="left:617.1px;top:3.2px;height:19px;line-height:19px;font-size:14.6px;color:#fff;transform:scaleX(0.887);">0</div><div class="t" style="left:676.9px;top:3.2px;height:19px;line-height:19px;font-size:14.6px;color:#23497a;transform:scaleX(0.840);">00 00:00:12.034</div><div class="t" style="left:774.2px;top:3.2px;height:19px;line-height:19px;font-size:14.6px;color:#23497a;transform:scaleX(0.831);">12,034</div><div class="t" style="left:833.9000000000001px;top:3.2px;height:19px;line-height:19px;font-size:14.6px;color:#23497a;transform:scaleX(0.899);">0</div><div class="t" style="left:894.0px;top:3.2px;height:19px;line-height:19px;font-size:14.6px;color:#23497a;transform:scaleX(0.899);">0</div><div class="t" style="left:954.0999999999999px;top:3.2px;height:19px;line-height:19px;font-size:14.6px;color:#23497a;transform:scaleX(0.899);">0</div><div class="t" style="left:1014.0999999999999px;top:3.2px;height:19px;line-height:19px;font-size:14.6px;color:#23497a;transform:scaleX(0.899);">0</div><div class="t" style="left:1074.2px;top:3.2px;height:19px;line-height:19px;font-size:14.6px;color:#23497a;transform:scaleX(0.899);">0</div><div class="t" style="left:1134.1px;top:3.2px;height:19px;line-height:19px;font-size:14.6px;color:#23497a;transform:scaleX(0.839);">WAITFOR</div><div style="left:0px;top:24px;width:1139.2px;height:23px;background:#f1f1f6;"></div><div style="left:614.3px;top:24px;width:58.8px;height:23px;background:#05683a;"></div><div style="left:0px;top:47px;width:1139.2px;height:1px;background:#9c9c9c;"></div><div class="t" style="left:3.5999999999999943px;top:26.2px;height:19px;line-height:19px;font-size:14.6px;color:#23497a;text-decoration:underline;transform:scaleX(0.884);">LAB2012</div><div class="t" style="left:67.5px;top:26.2px;height:19px;line-height:19px;font-size:14.6px;color:#23497a;text-decoration:underline;transform:scaleX(0.862);">53</div><div class="t" style="left:127.69999999999999px;top:26.2px;height:19px;line-height:19px;font-size:14.6px;color:#23497a;text-decoration:underline;transform:scaleX(0.897);">WAITFOR DELAY '00:10:00'</div><div class="t" style="left:327.70000000000005px;top:26.2px;height:19px;line-height:19px;font-size:14.6px;color:#23497a;text-decoration:underline;transform:scaleX(0.901);">WAITFOR DELAY '00:10:00'</div><div class="t" style="left:528.0px;top:26.2px;height:19px;line-height:19px;font-size:14.6px;color:#23497a;text-decoration:underline;transform:scaleX(0.900);">Find Plan</div><div class="t" style="left:617.1px;top:27.2px;height:19px;line-height:19px;font-size:14.6px;color:#fff;transform:scaleX(0.887);">0</div><div class="t" style="left:676.9px;top:27.2px;height:19px;line-height:19px;font-size:14.6px;color:#23497a;transform:scaleX(0.840);">00 00:00:42.014</div><div class="t" style="left:774.2px;top:27.2px;height:19px;line-height:19px;font-size:14.6px;color:#23497a;transform:scaleX(0.831);">42,014</div><div class="t" style="left:833.9000000000001px;top:27.2px;height:19px;line-height:19px;font-size:14.6px;color:#23497a;transform:scaleX(0.899);">0</div><div class="t" style="left:894.0px;top:27.2px;height:19px;line-height:19px;font-size:14.6px;color:#23497a;transform:scaleX(0.899);">0</div><div class="t" style="left:954.0999999999999px;top:27.2px;height:19px;line-height:19px;font-size:14.6px;color:#23497a;transform:scaleX(0.899);">0</div><div class="t" style="left:1014.0999999999999px;top:27.2px;height:19px;line-height:19px;font-size:14.6px;color:#23497a;transform:scaleX(0.899);">0</div><div class="t" style="left:1074.2px;top:27.2px;height:19px;line-height:19px;font-size:14.6px;color:#23497a;transform:scaleX(0.899);">0</div><div class="t" style="left:1134.1px;top:27.2px;height:19px;line-height:19px;font-size:14.6px;color:#23497a;transform:scaleX(0.839);">WAITFOR</div><div style="left:0px;top:48px;width:1139.2px;height:23px;background:#f1f1f6;"></div><div style="left:614.3px;top:48px;width:58.8px;height:23px;background:#05683a;"></div><div style="left:0px;top:71px;width:1139.2px;height:1px;background:#9c9c9c;"></div><div class="t" style="left:3.5999999999999943px;top:50.2px;height:19px;line-height:19px;font-size:14.6px;color:#23497a;text-decoration:underline;transform:scaleX(0.884);">LAB2012</div><div class="t" style="left:67.5px;top:50.2px;height:19px;line-height:19px;font-size:14.6px;color:#23497a;text-decoration:underline;transform:scaleX(0.862);">53</div><div class="t" style="left:127.69999999999999px;top:50.2px;height:19px;line-height:19px;font-size:14.6px;color:#23497a;text-decoration:underline;transform:scaleX(0.897);">WAITFOR DELAY '00:10:00'</div><div class="t" style="left:327.70000000000005px;top:50.2px;height:19px;line-height:19px;font-size:14.6px;color:#23497a;text-decoration:underline;transform:scaleX(0.901);">WAITFOR DELAY '00:10:00'</div><div class="t" style="left:528.0px;top:50.2px;height:19px;line-height:19px;font-size:14.6px;color:#23497a;text-decoration:underline;transform:scaleX(0.900);">Find Plan</div><div class="t" style="left:617.1px;top:51.2px;height:19px;line-height:19px;font-size:14.6px;color:#fff;transform:scaleX(0.887);">0</div><div class="t" style="left:676.9px;top:51.2px;height:19px;line-height:19px;font-size:14.6px;color:#23497a;transform:scaleX(0.840);">00 00:01:12.047</div><div class="t" style="left:774.2px;top:51.2px;height:19px;line-height:19px;font-size:14.6px;color:#23497a;transform:scaleX(0.831);">72,047</div><div class="t" style="left:833.9000000000001px;top:51.2px;height:19px;line-height:19px;font-size:14.6px;color:#23497a;transform:scaleX(0.899);">0</div><div class="t" style="left:894.0px;top:51.2px;height:19px;line-height:19px;font-size:14.6px;color:#23497a;transform:scaleX(0.899);">0</div><div class="t" style="left:954.0999999999999px;top:51.2px;height:19px;line-height:19px;font-size:14.6px;color:#23497a;transform:scaleX(0.899);">0</div><div class="t" style="left:1014.0999999999999px;top:51.2px;height:19px;line-height:19px;font-size:14.6px;color:#23497a;transform:scaleX(0.899);">0</div><div class="t" style="left:1074.2px;top:51.2px;height:19px;line-height:19px;font-size:14.6px;color:#23497a;transform:scaleX(0.899);">0</div><div class="t" style="left:1134.1px;top:51.2px;height:19px;line-height:19px;font-size:14.6px;color:#23497a;transform:scaleX(0.839);">WAITFOR</div><div style="left:0px;top:72px;width:1139.2px;height:23px;background:#f1f1f6;"></div><div style="left:614.3px;top:72px;width:58.8px;height:23px;background:#05683a;"></div><div style="left:0px;top:95px;width:1139.2px;height:1px;background:#9c9c9c;"></div><div class="t" style="left:3.5999999999999943px;top:74.2px;height:19px;line-height:19px;font-size:14.6px;color:#23497a;text-decoration:underline;transform:scaleX(0.884);">LAB2012</div><div class="t" style="left:67.5px;top:74.2px;height:19px;line-height:19px;font-size:14.6px;color:#23497a;text-decoration:underline;transform:scaleX(0.862);">53</div><div class="t" style="left:127.69999999999999px;top:74.2px;height:19px;line-height:19px;font-size:14.6px;color:#23497a;text-decoration:underline;transform:scaleX(0.897);">WAITFOR DELAY '00:10:00'</div><div class="t" style="left:327.70000000000005px;top:74.2px;height:19px;line-height:19px;font-size:14.6px;color:#23497a;text-decoration:underline;transform:scaleX(0.901);">WAITFOR DELAY '00:10:00'</div><div class="t" style="left:528.0px;top:74.2px;height:19px;line-height:19px;font-size:14.6px;color:#23497a;text-decoration:underline;transform:scaleX(0.900);">Find Plan</div><div class="t" style="left:617.1px;top:75.2px;height:19px;line-height:19px;font-size:14.6px;color:#fff;transform:scaleX(0.887);">0</div><div class="t" style="left:676.9px;top:75.2px;height:19px;line-height:19px;font-size:14.6px;color:#23497a;transform:scaleX(0.840);">00 00:01:42.024</div><div class="t" style="left:774.2px;top:75.2px;height:19px;line-height:19px;font-size:14.6px;color:#23497a;transform:scaleX(0.829);">102,024</div><div class="t" style="left:833.9000000000001px;top:75.2px;height:19px;line-height:19px;font-size:14.6px;color:#23497a;transform:scaleX(0.899);">0</div><div class="t" style="left:894.0px;top:75.2px;height:19px;line-height:19px;font-size:14.6px;color:#23497a;transform:scaleX(0.899);">0</div><div class="t" style="left:954.0999999999999px;top:75.2px;height:19px;line-height:19px;font-size:14.6px;color:#23497a;transform:scaleX(0.899);">0</div><div class="t" style="left:1014.0999999999999px;top:75.2px;height:19px;line-height:19px;font-size:14.6px;color:#23497a;transform:scaleX(0.899);">0</div><div class="t" style="left:1074.2px;top:75.2px;height:19px;line-height:19px;font-size:14.6px;color:#23497a;transform:scaleX(0.899);">0</div><div class="t" style="left:1134.1px;top:75.2px;height:19px;line-height:19px;font-size:14.6px;color:#23497a;transform:scaleX(0.839);">WAITFOR</div><div style="left:0px;top:96px;width:1139.2px;height:23px;background:#f1f1f6;"></div><div style="left:614.3px;top:96px;width:58.8px;height:23px;background:#05683a;"></div><div style="left:0px;top:119px;width:1139.2px;height:1px;background:#9c9c9c;"></div><div class="t" style="left:3.5999999999999943px;top:98.2px;height:19px;line-height:19px;font-size:14.6px;color:#23497a;text-decoration:underline;transform:scaleX(0.884);">LAB2012</div><div class="t" style="left:67.5px;top:98.2px;height:19px;line-height:19px;font-size:14.6px;color:#23497a;text-decoration:underline;transform:scaleX(0.862);">53</div><div class="t" style="left:127.69999999999999px;top:98.2px;height:19px;line-height:19px;font-size:14.6px;color:#23497a;text-decoration:underline;transform:scaleX(0.897);">WAITFOR DELAY '00:10:00'</div><div class="t" style="left:327.70000000000005px;top:98.2px;height:19px;line-height:19px;font-size:14.6px;color:#23497a;text-decoration:underline;transform:scaleX(0.901);">WAITFOR DELAY '00:10:00'</div><div class="t" style="left:528.0px;top:98.2px;height:19px;line-height:19px;font-size:14.6px;color:#23497a;text-decoration:underline;transform:scaleX(0.900);">Find Plan</div><div class="t" style="left:617.1px;top:99.2px;height:19px;line-height:19px;font-size:14.6px;color:#fff;transform:scaleX(0.887);">0</div><div class="t" style="left:676.9px;top:99.2px;height:19px;line-height:19px;font-size:14.6px;color:#23497a;transform:scaleX(0.840);">00 00:02:12.024</div><div class="t" style="left:774.2px;top:99.2px;height:19px;line-height:19px;font-size:14.6px;color:#23497a;transform:scaleX(0.829);">132,024</div><div class="t" style="left:833.9000000000001px;top:99.2px;height:19px;line-height:19px;font-size:14.6px;color:#23497a;transform:scaleX(0.899);">0</div><div class="t" style="left:894.0px;top:99.2px;height:19px;line-height:19px;font-size:14.6px;color:#23497a;transform:scaleX(0.899);">0</div><div class="t" style="left:954.0999999999999px;top:99.2px;height:19px;line-height:19px;font-size:14.6px;color:#23497a;transform:scaleX(0.899);">0</div><div class="t" style="left:1014.0999999999999px;top:99.2px;height:19px;line-height:19px;font-size:14.6px;color:#23497a;transform:scaleX(0.899);">0</div><div class="t" style="left:1074.2px;top:99.2px;height:19px;line-height:19px;font-size:14.6px;color:#23497a;transform:scaleX(0.899);">0</div><div class="t" style="left:1134.1px;top:99.2px;height:19px;line-height:19px;font-size:14.6px;color:#23497a;transform:scaleX(0.839);">WAITFOR</div><div style="left:0px;top:120px;width:1139.2px;height:23px;background:#f1f1f6;"></div><div style="left:614.3px;top:120px;width:58.8px;height:23px;background:#05683a;"></div><div style="left:0px;top:143px;width:1139.2px;height:1px;background:#9c9c9c;"></div><div class="t" style="left:3.5999999999999943px;top:122.2px;height:19px;line-height:19px;font-size:14.6px;color:#23497a;text-decoration:underline;transform:scaleX(0.884);">LAB2012</div><div class="t" style="left:67.5px;top:122.2px;height:19px;line-height:19px;font-size:14.6px;color:#23497a;text-decoration:underline;transform:scaleX(0.862);">53</div><div class="t" style="left:127.69999999999999px;top:122.2px;height:19px;line-height:19px;font-size:14.6px;color:#23497a;text-decoration:underline;transform:scaleX(0.897);">WAITFOR DELAY '00:10:00'</div><div class="t" style="left:327.70000000000005px;top:122.2px;height:19px;line-height:19px;font-size:14.6px;color:#23497a;text-decoration:underline;transform:scaleX(0.901);">WAITFOR DELAY '00:10:00'</div><div class="t" style="left:528.0px;top:122.2px;height:19px;line-height:19px;font-size:14.6px;color:#23497a;text-decoration:underline;transform:scaleX(0.900);">Find Plan</div><div class="t" style="left:617.1px;top:123.2px;height:19px;line-height:19px;font-size:14.6px;color:#fff;transform:scaleX(0.887);">0</div><div class="t" style="left:676.9px;top:123.2px;height:19px;line-height:19px;font-size:14.6px;color:#23497a;transform:scaleX(0.840);">00 00:02:42.024</div><div class="t" style="left:774.2px;top:123.2px;height:19px;line-height:19px;font-size:14.6px;color:#23497a;transform:scaleX(0.829);">162,024</div><div class="t" style="left:833.9000000000001px;top:123.2px;height:19px;line-height:19px;font-size:14.6px;color:#23497a;transform:scaleX(0.899);">0</div><div class="t" style="left:894.0px;top:123.2px;height:19px;line-height:19px;font-size:14.6px;color:#23497a;transform:scaleX(0.899);">0</div><div class="t" style="left:954.0999999999999px;top:123.2px;height:19px;line-height:19px;font-size:14.6px;color:#23497a;transform:scaleX(0.899);">0</div><div class="t" style="left:1014.0999999999999px;top:123.2px;height:19px;line-height:19px;font-size:14.6px;color:#23497a;transform:scaleX(0.899);">0</div><div class="t" style="left:1074.2px;top:123.2px;height:19px;line-height:19px;font-size:14.6px;color:#23497a;transform:scaleX(0.899);">0</div><div class="t" style="left:1134.1px;top:123.2px;height:19px;line-height:19px;font-size:14.6px;color:#23497a;transform:scaleX(0.839);">WAITFOR</div><div style="left:0px;top:144px;width:1139.2px;height:23px;background:#f1f1f6;"></div><div style="left:614.3px;top:144px;width:58.8px;height:23px;background:#05683a;"></div><div style="left:0px;top:167px;width:1139.2px;height:1px;background:#9c9c9c;"></div><div class="t" style="left:3.5999999999999943px;top:146.2px;height:19px;line-height:19px;font-size:14.6px;color:#23497a;text-decoration:underline;transform:scaleX(0.884);">LAB2012</div><div class="t" style="left:67.5px;top:146.2px;height:19px;line-height:19px;font-size:14.6px;color:#23497a;text-decoration:underline;transform:scaleX(0.862);">53</div><div class="t" style="left:127.69999999999999px;top:146.2px;height:19px;line-height:19px;font-size:14.6px;color:#23497a;text-decoration:underline;transform:scaleX(0.897);">WAITFOR DELAY '00:10:00'</div><div class="t" style="left:327.70000000000005px;top:146.2px;height:19px;line-height:19px;font-size:14.6px;color:#23497a;text-decoration:underline;transform:scaleX(0.901);">WAITFOR DELAY '00:10:00'</div><div class="t" style="left:528.0px;top:146.2px;height:19px;line-height:19px;font-size:14.6px;color:#23497a;text-decoration:underline;transform:scaleX(0.900);">Find Plan</div><div class="t" style="left:617.1px;top:147.2px;height:19px;line-height:19px;font-size:14.6px;color:#fff;transform:scaleX(0.887);">0</div><div class="t" style="left:676.9px;top:147.2px;height:19px;line-height:19px;font-size:14.6px;color:#23497a;transform:scaleX(0.840);">00 00:03:12.037</div><div class="t" style="left:774.2px;top:147.2px;height:19px;line-height:19px;font-size:14.6px;color:#23497a;transform:scaleX(0.829);">192,037</div><div class="t" style="left:833.9000000000001px;top:147.2px;height:19px;line-height:19px;font-size:14.6px;color:#23497a;transform:scaleX(0.899);">0</div><div class="t" style="left:894.0px;top:147.2px;height:19px;line-height:19px;font-size:14.6px;color:#23497a;transform:scaleX(0.899);">0</div><div class="t" style="left:954.0999999999999px;top:147.2px;height:19px;line-height:19px;font-size:14.6px;color:#23497a;transform:scaleX(0.899);">0</div><div class="t" style="left:1014.0999999999999px;top:147.2px;height:19px;line-height:19px;font-size:14.6px;color:#23497a;transform:scaleX(0.899);">0</div><div class="t" style="left:1074.2px;top:147.2px;height:19px;line-height:19px;font-size:14.6px;color:#23497a;transform:scaleX(0.899);">0</div><div class="t" style="left:1134.1px;top:147.2px;height:19px;line-height:19px;font-size:14.6px;color:#23497a;transform:scaleX(0.839);">WAITFOR</div><div style="left:0px;top:168px;width:1139.2px;height:23px;background:#f1f1f6;"></div><div style="left:614.3px;top:168px;width:58.8px;height:23px;background:#05683a;"></div><div style="left:0px;top:191px;width:1139.2px;height:1px;background:#9c9c9c;"></div><div class="t" style="left:3.5999999999999943px;top:170.2px;height:19px;line-height:19px;font-size:14.6px;color:#23497a;text-decoration:underline;transform:scaleX(0.884);">LAB2012</div><div class="t" style="left:67.5px;top:170.2px;height:19px;line-height:19px;font-size:14.6px;color:#23497a;text-decoration:underline;transform:scaleX(0.862);">53</div><div class="t" style="left:127.69999999999999px;top:170.2px;height:19px;line-height:19px;font-size:14.6px;color:#23497a;text-decoration:underline;transform:scaleX(0.897);">WAITFOR DELAY '00:10:00'</div><div class="t" style="left:327.70000000000005px;top:170.2px;height:19px;line-height:19px;font-size:14.6px;color:#23497a;text-decoration:underline;transform:scaleX(0.901);">WAITFOR DELAY '00:10:00'</div><div class="t" style="left:528.0px;top:170.2px;height:19px;line-height:19px;font-size:14.6px;color:#23497a;text-decoration:underline;transform:scaleX(0.900);">Find Plan</div><div class="t" style="left:617.1px;top:171.2px;height:19px;line-height:19px;font-size:14.6px;color:#fff;transform:scaleX(0.887);">0</div><div class="t" style="left:676.9px;top:171.2px;height:19px;line-height:19px;font-size:14.6px;color:#23497a;transform:scaleX(0.840);">00 00:03:42.014</div><div class="t" style="left:774.2px;top:171.2px;height:19px;line-height:19px;font-size:14.6px;color:#23497a;transform:scaleX(0.829);">222,014</div><div class="t" style="left:833.9000000000001px;top:171.2px;height:19px;line-height:19px;font-size:14.6px;color:#23497a;transform:scaleX(0.899);">0</div><div class="t" style="left:894.0px;top:171.2px;height:19px;line-height:19px;font-size:14.6px;color:#23497a;transform:scaleX(0.899);">0</div><div class="t" style="left:954.0999999999999px;top:171.2px;height:19px;line-height:19px;font-size:14.6px;color:#23497a;transform:scaleX(0.899);">0</div><div class="t" style="left:1014.0999999999999px;top:171.2px;height:19px;line-height:19px;font-size:14.6px;color:#23497a;transform:scaleX(0.899);">0</div><div class="t" style="left:1074.2px;top:171.2px;height:19px;line-height:19px;font-size:14.6px;color:#23497a;transform:scaleX(0.899);">0</div><div class="t" style="left:1134.1px;top:171.2px;height:19px;line-height:19px;font-size:14.6px;color:#23497a;transform:scaleX(0.839);">WAITFOR</div><div style="left:0px;top:192px;width:1139.2px;height:23px;background:#f1f1f6;"></div><div style="left:614.3px;top:192px;width:58.8px;height:23px;background:#05683a;"></div><div style="left:0px;top:215px;width:1139.2px;height:1px;background:#9c9c9c;"></div><div class="t" style="left:3.5999999999999943px;top:194.2px;height:19px;line-height:19px;font-size:14.6px;color:#23497a;text-decoration:underline;transform:scaleX(0.884);">LAB2012</div><div class="t" style="left:67.5px;top:194.2px;height:19px;line-height:19px;font-size:14.6px;color:#23497a;text-decoration:underline;transform:scaleX(0.862);">53</div><div class="t" style="left:127.69999999999999px;top:194.2px;height:19px;line-height:19px;font-size:14.6px;color:#23497a;text-decoration:underline;transform:scaleX(0.897);">WAITFOR DELAY '00:10:00'</div><div class="t" style="left:327.70000000000005px;top:194.2px;height:19px;line-height:19px;font-size:14.6px;color:#23497a;text-decoration:underline;transform:scaleX(0.901);">WAITFOR DELAY '00:10:00'</div><div class="t" style="left:528.0px;top:194.2px;height:19px;line-height:19px;font-size:14.6px;color:#23497a;text-decoration:underline;transform:scaleX(0.900);">Find Plan</div><div class="t" style="left:617.1px;top:195.2px;height:19px;line-height:19px;font-size:14.6px;color:#fff;transform:scaleX(0.887);">0</div><div class="t" style="left:676.9px;top:195.2px;height:19px;line-height:19px;font-size:14.6px;color:#23497a;transform:scaleX(0.840);">00 00:04:12.041</div><div class="t" style="left:774.2px;top:195.2px;height:19px;line-height:19px;font-size:14.6px;color:#23497a;transform:scaleX(0.829);">252,041</div><div class="t" style="left:833.9000000000001px;top:195.2px;height:19px;line-height:19px;font-size:14.6px;color:#23497a;transform:scaleX(0.899);">0</div><div class="t" style="left:894.0px;top:195.2px;height:19px;line-height:19px;font-size:14.6px;color:#23497a;transform:scaleX(0.899);">0</div><div class="t" style="left:954.0999999999999px;top:195.2px;height:19px;line-height:19px;font-size:14.6px;color:#23497a;transform:scaleX(0.899);">0</div><div class="t" style="left:1014.0999999999999px;top:195.2px;height:19px;line-height:19px;font-size:14.6px;color:#23497a;transform:scaleX(0.899);">0</div><div class="t" style="left:1074.2px;top:195.2px;height:19px;line-height:19px;font-size:14.6px;color:#23497a;transform:scaleX(0.899);">0</div><div class="t" style="left:1134.1px;top:195.2px;height:19px;line-height:19px;font-size:14.6px;color:#23497a;transform:scaleX(0.839);">WAITFOR</div><div style="left:0px;top:216px;width:1139.2px;height:23px;background:#f1f1f6;"></div><div style="left:614.3px;top:216px;width:58.8px;height:23px;background:#05683a;"></div><div style="left:0px;top:239px;width:1139.2px;height:1px;background:#9c9c9c;"></div><div class="t" style="left:3.5999999999999943px;top:218.2px;height:19px;line-height:19px;font-size:14.6px;color:#23497a;text-decoration:underline;transform:scaleX(0.884);">LAB2012</div><div class="t" style="left:67.5px;top:218.2px;height:19px;line-height:19px;font-size:14.6px;color:#23497a;text-decoration:underline;transform:scaleX(0.862);">53</div><div class="t" style="left:127.69999999999999px;top:218.2px;height:19px;line-height:19px;font-size:14.6px;color:#23497a;text-decoration:underline;transform:scaleX(0.897);">WAITFOR DELAY '00:10:00'</div><div class="t" style="left:327.70000000000005px;top:218.2px;height:19px;line-height:19px;font-size:14.6px;color:#23497a;text-decoration:underline;transform:scaleX(0.901);">WAITFOR DELAY '00:10:00'</div><div class="t" style="left:528.0px;top:218.2px;height:19px;line-height:19px;font-size:14.6px;color:#23497a;text-decoration:underline;transform:scaleX(0.900);">Find Plan</div><div class="t" style="left:617.1px;top:219.2px;height:19px;line-height:19px;font-size:14.6px;color:#fff;transform:scaleX(0.887);">0</div><div class="t" style="left:676.9px;top:219.2px;height:19px;line-height:19px;font-size:14.6px;color:#23497a;transform:scaleX(0.840);">00 00:04:42.021</div><div class="t" style="left:774.2px;top:219.2px;height:19px;line-height:19px;font-size:14.6px;color:#23497a;transform:scaleX(0.829);">282,021</div><div class="t" style="left:833.9000000000001px;top:219.2px;height:19px;line-height:19px;font-size:14.6px;color:#23497a;transform:scaleX(0.899);">0</div><div class="t" style="left:894.0px;top:219.2px;height:19px;line-height:19px;font-size:14.6px;color:#23497a;transform:scaleX(0.899);">0</div><div class="t" style="left:954.0999999999999px;top:219.2px;height:19px;line-height:19px;font-size:14.6px;color:#23497a;transform:scaleX(0.899);">0</div><div class="t" style="left:1014.0999999999999px;top:219.2px;height:19px;line-height:19px;font-size:14.6px;color:#23497a;transform:scaleX(0.899);">0</div><div class="t" style="left:1074.2px;top:219.2px;height:19px;line-height:19px;font-size:14.6px;color:#23497a;transform:scaleX(0.899);">0</div><div class="t" style="left:1134.1px;top:219.2px;height:19px;line-height:19px;font-size:14.6px;color:#23497a;transform:scaleX(0.839);">WAITFOR</div><div style="left:0px;top:240px;width:1139.2px;height:23px;background:#f1f1f6;"></div><div style="left:614.3px;top:240px;width:58.8px;height:23px;background:#05683a;"></div><div style="left:0px;top:263px;width:1139.2px;height:1px;background:#9c9c9c;"></div><div class="t" style="left:3.5999999999999943px;top:242.2px;height:19px;line-height:19px;font-size:14.6px;color:#23497a;text-decoration:underline;transform:scaleX(0.884);">LAB2012</div><div class="t" style="left:67.5px;top:242.2px;height:19px;line-height:19px;font-size:14.6px;color:#23497a;text-decoration:underline;transform:scaleX(0.862);">53</div><div class="t" style="left:127.69999999999999px;top:242.2px;height:19px;line-height:19px;font-size:14.6px;color:#23497a;text-decoration:underline;transform:scaleX(0.897);">WAITFOR DELAY '00:10:00'</div><div class="t" style="left:327.70000000000005px;top:242.2px;height:19px;line-height:19px;font-size:14.6px;color:#23497a;text-decoration:underline;transform:scaleX(0.901);">WAITFOR DELAY '00:10:00'</div><div class="t" style="left:528.0px;top:242.2px;height:19px;line-height:19px;font-size:14.6px;color:#23497a;text-decoration:underline;transform:scaleX(0.900);">Find Plan</div><div class="t" style="left:617.1px;top:243.2px;height:19px;line-height:19px;font-size:14.6px;color:#fff;transform:scaleX(0.887);">0</div><div class="t" style="left:676.9px;top:243.2px;height:19px;line-height:19px;font-size:14.6px;color:#23497a;transform:scaleX(0.840);">00 00:05:12.104</div><div class="t" style="left:774.2px;top:243.2px;height:19px;line-height:19px;font-size:14.6px;color:#23497a;transform:scaleX(0.829);">312,104</div><div class="t" style="left:833.9000000000001px;top:243.2px;height:19px;line-height:19px;font-size:14.6px;color:#23497a;transform:scaleX(0.899);">0</div><div class="t" style="left:894.0px;top:243.2px;height:19px;line-height:19px;font-size:14.6px;color:#23497a;transform:scaleX(0.899);">0</div><div class="t" style="left:954.0999999999999px;top:243.2px;height:19px;line-height:19px;font-size:14.6px;color:#23497a;transform:scaleX(0.899);">0</div><div class="t" style="left:1014.0999999999999px;top:243.2px;height:19px;line-height:19px;font-size:14.6px;color:#23497a;transform:scaleX(0.899);">0</div><div class="t" style="left:1074.2px;top:243.2px;height:19px;line-height:19px;font-size:14.6px;color:#23497a;transform:scaleX(0.899);">0</div><div class="t" style="left:1134.1px;top:243.2px;height:19px;line-height:19px;font-size:14.6px;color:#23497a;transform:scaleX(0.839);">WAITFOR</div><div style="left:0px;top:264px;width:1139.2px;height:23px;background:#f1f1f6;"></div><div style="left:614.3px;top:264px;width:58.8px;height:23px;background:#05683a;"></div><div style="left:0px;top:287px;width:1139.2px;height:1px;background:#9c9c9c;"></div><div class="t" style="left:3.5999999999999943px;top:266.2px;height:19px;line-height:19px;font-size:14.6px;color:#23497a;text-decoration:underline;transform:scaleX(0.884);">LAB2012</div><div class="t" style="left:67.5px;top:266.2px;height:19px;line-height:19px;font-size:14.6px;color:#23497a;text-decoration:underline;transform:scaleX(0.862);">53</div><div class="t" style="left:127.69999999999999px;top:266.2px;height:19px;line-height:19px;font-size:14.6px;color:#23497a;text-decoration:underline;transform:scaleX(0.897);">WAITFOR DELAY '00:10:00'</div><div class="t" style="left:327.70000000000005px;top:266.2px;height:19px;line-height:19px;font-size:14.6px;color:#23497a;text-decoration:underline;transform:scaleX(0.901);">WAITFOR DELAY '00:10:00'</div><div class="t" style="left:528.0px;top:266.2px;height:19px;line-height:19px;font-size:14.6px;color:#23497a;text-decoration:underline;transform:scaleX(0.900);">Find Plan</div><div class="t" style="left:617.1px;top:267.2px;height:19px;line-height:19px;font-size:14.6px;color:#fff;transform:scaleX(0.887);">0</div><div class="t" style="left:676.9px;top:267.2px;height:19px;line-height:19px;font-size:14.6px;color:#23497a;transform:scaleX(0.840);">00 00:05:42.021</div><div class="t" style="left:774.2px;top:267.2px;height:19px;line-height:19px;font-size:14.6px;color:#23497a;transform:scaleX(0.829);">342,021</div><div class="t" style="left:833.9000000000001px;top:267.2px;height:19px;line-height:19px;font-size:14.6px;color:#23497a;transform:scaleX(0.899);">0</div><div class="t" style="left:894.0px;top:267.2px;height:19px;line-height:19px;font-size:14.6px;color:#23497a;transform:scaleX(0.899);">0</div><div class="t" style="left:954.0999999999999px;top:267.2px;height:19px;line-height:19px;font-size:14.6px;color:#23497a;transform:scaleX(0.899);">0</div><div class="t" style="left:1014.0999999999999px;top:267.2px;height:19px;line-height:19px;font-size:14.6px;color:#23497a;transform:scaleX(0.899);">0</div><div class="t" style="left:1074.2px;top:267.2px;height:19px;line-height:19px;font-size:14.6px;color:#23497a;transform:scaleX(0.899);">0</div><div class="t" style="left:1134.1px;top:267.2px;height:19px;line-height:19px;font-size:14.6px;color:#23497a;transform:scaleX(0.839);">WAITFOR</div><div style="left:0px;top:288px;width:1139.2px;height:23px;background:#f1f1f6;"></div><div style="left:614.3px;top:288px;width:58.8px;height:23px;background:#05683a;"></div><div style="left:0px;top:311px;width:1139.2px;height:1px;background:#9c9c9c;"></div><div class="t" style="left:3.5999999999999943px;top:290.2px;height:19px;line-height:19px;font-size:14.6px;color:#23497a;text-decoration:underline;transform:scaleX(0.884);">LAB2012</div><div class="t" style="left:67.5px;top:290.2px;height:19px;line-height:19px;font-size:14.6px;color:#23497a;text-decoration:underline;transform:scaleX(0.862);">53</div><div class="t" style="left:127.69999999999999px;top:290.2px;height:19px;line-height:19px;font-size:14.6px;color:#23497a;text-decoration:underline;transform:scaleX(0.897);">WAITFOR DELAY '00:10:00'</div><div class="t" style="left:327.70000000000005px;top:290.2px;height:19px;line-height:19px;font-size:14.6px;color:#23497a;text-decoration:underline;transform:scaleX(0.901);">WAITFOR DELAY '00:10:00'</div><div class="t" style="left:528.0px;top:290.2px;height:19px;line-height:19px;font-size:14.6px;color:#23497a;text-decoration:underline;transform:scaleX(0.900);">Find Plan</div><div class="t" style="left:617.1px;top:291.2px;height:19px;line-height:19px;font-size:14.6px;color:#fff;transform:scaleX(0.887);">0</div><div class="t" style="left:676.9px;top:291.2px;height:19px;line-height:19px;font-size:14.6px;color:#23497a;transform:scaleX(0.840);">00 00:06:12.037</div><div class="t" style="left:774.2px;top:291.2px;height:19px;line-height:19px;font-size:14.6px;color:#23497a;transform:scaleX(0.829);">372,037</div><div class="t" style="left:833.9000000000001px;top:291.2px;height:19px;line-height:19px;font-size:14.6px;color:#23497a;transform:scaleX(0.899);">0</div><div class="t" style="left:894.0px;top:291.2px;height:19px;line-height:19px;font-size:14.6px;color:#23497a;transform:scaleX(0.899);">0</div><div class="t" style="left:954.0999999999999px;top:291.2px;height:19px;line-height:19px;font-size:14.6px;color:#23497a;transform:scaleX(0.899);">0</div><div class="t" style="left:1014.0999999999999px;top:291.2px;height:19px;line-height:19px;font-size:14.6px;color:#23497a;transform:scaleX(0.899);">0</div><div class="t" style="left:1074.2px;top:291.2px;height:19px;line-height:19px;font-size:14.6px;color:#23497a;transform:scaleX(0.899);">0</div><div class="t" style="left:1134.1px;top:291.2px;height:19px;line-height:19px;font-size:14.6px;color:#23497a;transform:scaleX(0.839);">WAITFOR</div><div style="left:63px;top:0px;width:1px;height:312px;background:#9c9c9c;"></div><div style="left:123px;top:0px;width:1px;height:312px;background:#9c9c9c;"></div><div style="left:323px;top:0px;width:1px;height:312px;background:#9c9c9c;"></div><div style="left:523px;top:0px;width:1px;height:312px;background:#9c9c9c;"></div><div style="left:613px;top:0px;width:1px;height:312px;background:#9c9c9c;"></div><div style="left:673px;top:0px;width:1px;height:312px;background:#9c9c9c;"></div><div style="left:770px;top:0px;width:1px;height:312px;background:#9c9c9c;"></div><div style="left:830px;top:0px;width:1px;height:312px;background:#9c9c9c;"></div><div style="left:890px;top:0px;width:1px;height:312px;background:#9c9c9c;"></div><div style="left:950px;top:0px;width:1px;height:312px;background:#9c9c9c;"></div><div style="left:1010px;top:0px;width:1px;height:312px;background:#9c9c9c;"></div><div style="left:1070px;top:0px;width:1px;height:312px;background:#9c9c9c;"></div><div style="left:1130px;top:0px;width:1px;height:312px;background:#9c9c9c;"></div></div><div style="left:1375.2px;top:375.3px;width:21px;height:377.5px;background:#f0f0f0;"></div><div style="left:1376.2px;top:394.4px;width:18.6px;height:71px;background:#cdcdcd;"></div><svg style="position:absolute;left:1380.6px;top:379.5px" width="10" height="8" viewBox="0 0 10 8"><path d="M0.8 6.5 L5 1.5 L9.2 6.5" fill="none" stroke="#444" stroke-width="1.7"/></svg><svg style="position:absolute;left:1380.6px;top:737.5px" width="10" height="8" viewBox="0 0 10 8"><path d="M0.8 1.5 L5 6.5 L9.2 1.5" fill="none" stroke="#444" stroke-width="1.7"/></svg><div style="left:236px;top:752.5px;width:1160.2px;height:20.5px;background:#f0f0f0;"></div><div style="left:256px;top:753.5px;width:342px;height:18.6px;background:#cdcdcd;"></div><svg style="position:absolute;left:241px;top:757.5px" width="8" height="10" viewBox="0 0 8 10"><path d="M6.5 0.8 L1.5 5 L6.5 9.2" fill="none" stroke="#444" stroke-width="1.7"/></svg><svg style="position:absolute;left:1360px;top:757.5px" width="8" height="10" viewBox="0 0 8 10"><path d="M1.5 0.8 L6.5 5 L1.5 9.2" fill="none" stroke="#444" stroke-width="1.7"/></svg><svg style="position:absolute;left:1384px;top:784px" width="10" height="10" viewBox="0 0 10 10"><rect x="8" y="0" width="2" height="2" fill="#9a9a9a"/><rect x="4" y="4" width="2" height="2" fill="#9a9a9a"/><rect x="8" y="4" width="2" height="2" fill="#9a9a9a"/><rect x="0" y="8" width="2" height="2" fill="#9a9a9a"/><rect x="4" y="8" width="2" height="2" fill="#9a9a9a"/><rect x="8" y="8" width="2" height="2" fill="#9a9a9a"/></svg>
<svg style="position:absolute;left:0;top:0" width="1572" height="886" viewBox="0 0 1572 886">
<defs><filter id="ds" x="-5%" y="-5%" width="110%" height="115%"><feDropShadow dx="2.5" dy="2.5" stdDeviation="1.6" flood-color="#000" flood-opacity="0.38"/></filter></defs>
<g filter="url(#ds)" stroke="#ff08ee" stroke-width="3.7" fill="#ff08ee" stroke-linecap="round">
<path d="M299.5 207.5 L61 317.2"/><path d="M788.5 202.5 L469.7 317.2"/>
<path d="M39.6 326.7 L57.3 311 L63.5 325.8 Z" stroke="none"/><path d="M447.7 325.3 L465.8 310.5 L473 325.3 Z" stroke="none"/></g>
</svg>
</body></html>
